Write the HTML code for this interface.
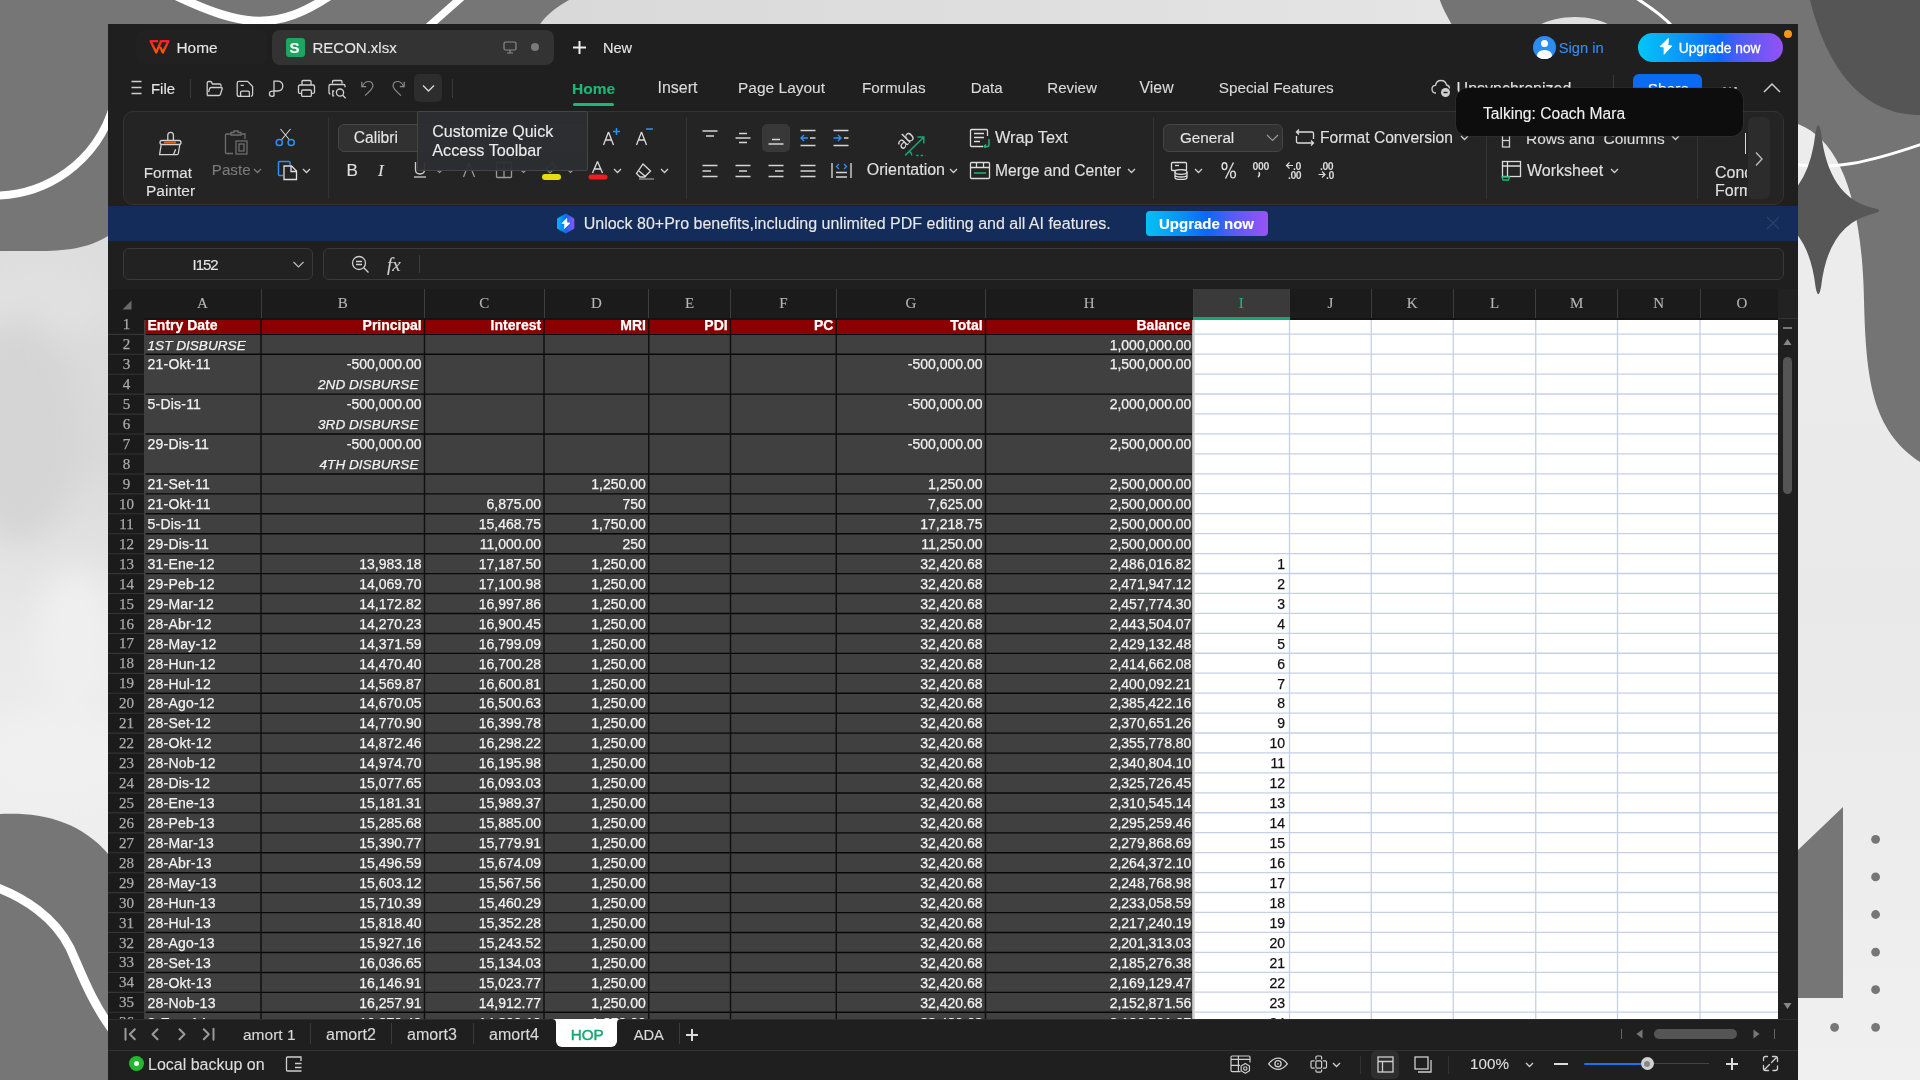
<!DOCTYPE html>
<html><head><meta charset="utf-8"><title>RECON.xlsx</title>
<style>
html,body{margin:0;padding:0;width:1920px;height:1080px;overflow:hidden;background:#e3e3e3}
body{position:relative;font-family:"Liberation Sans",sans-serif}
.r{position:absolute;display:block}
.t{position:absolute;white-space:pre;-webkit-text-stroke:0.12px currentColor}
.g .t{-webkit-text-stroke:0.25px currentColor}
</style></head><body>
<div style="position:absolute;left:0;top:0;width:1920px;height:1080px;filter:opacity(1)">

<svg class="r" style="left:0;top:0" width="1920" height="1080" viewBox="0 0 1920 1080">
 <defs><linearGradient id="lg" x1="0" y1="0" x2="0" y2="1"><stop offset="0.23" stop-color="#dddddd"/><stop offset="0.42" stop-color="#d9d9d9"/><stop offset="0.52" stop-color="#e3e3e3"/><stop offset="0.6" stop-color="#eaeaea"/><stop offset="0.75" stop-color="#eeeeee"/></linearGradient>
 <linearGradient id="rg" x1="0" y1="0" x2="0" y2="1"><stop offset="0.15" stop-color="#ececec"/><stop offset="0.5" stop-color="#e9e9e9"/><stop offset="1" stop-color="#f0f0f0"/></linearGradient></defs>
 <linearGradient id="tg" x1="0" y1="0" x2="1" y2="0"><stop offset="0" stop-color="#d9d9d9"/><stop offset="0.5" stop-color="#dedede"/><stop offset="1" stop-color="#e5e5e5"/></linearGradient>
 <rect width="1920" height="1080" fill="#e0e0e0"/>
 <rect x="530" y="0" width="930" height="30" fill="url(#tg)"/>
 <rect width="108" height="1080" fill="url(#lg)"/>
 <filter id="bl" x="-50%" y="-50%" width="200%" height="200%"><feGaussianBlur stdDeviation="14"/></filter>
 <g filter="url(#bl)"><ellipse cx="40" cy="300" rx="70" ry="40" fill="#e0e0e0"/><ellipse cx="20" cy="430" rx="60" ry="110" fill="#d5d5d5"/><ellipse cx="75" cy="640" rx="40" ry="70" fill="#efefef"/><ellipse cx="55" cy="760" rx="80" ry="50" fill="#f0f0f0"/></g>
 <!-- top-left grey -->
 <path d="M0 0 H569 C555 8 545 16 539 26 H108 V236 C92 246 72 251 40 251 H0 Z" fill="#767676"/>
 <path d="M-10 195.5 C45 197 97 163 114 104" stroke="#fff" stroke-width="8" fill="none"/>
 <path d="M174 -5 C210 12 236 21 259 21 C283 21 304 13 331 -5" stroke="#fff" stroke-width="8.5" fill="none"/>
 <path d="M462 -3 L428 27" stroke="#fff" stroke-width="7.5" fill="none"/>
 <!-- top-right grey -->
 <path d="M1440 0 H1920 V1080 H1798 V26 H1452.5 C1447 16 1442.5 8 1439.8 0 Z" fill="#747474"/>
 <path d="M1537 26 C1560 14 1590 14 1612 26 Z" fill="#e0e0e0"/>
 <path d="M1810 0 C1830 80 1870 115 1920 115 V0 Z" fill="#555"/>
 <path d="M1798 124 C1840 140 1862 200 1864 300 C1866 380 1872 430 1920 462 V1080 H1798 Z" fill="url(#rg)"/>
 <path d="M1636 -2 C1652 8 1663 16 1674 28" stroke="#fff" stroke-width="3" fill="none"/>
 <path d="M1790 163 C1830 172 1870 162 1925 143" stroke="#fff" stroke-width="3" fill="none"/>
 <path transform="translate(1818.3 210.8) scale(1.1 1.03) translate(-1817 -210)" d="M1814.5 134 Q1817 120 1819.5 134 Q1826 197 1866 207 Q1879 210 1866 213 Q1826 223 1819.5 284 Q1817 298 1814.5 284 Q1808 223 1768 213 Q1755 210 1768 207 Q1808 197 1814.5 134 Z" fill="#575757"/>
 <!-- bottom-left grey -->
 <path d="M0 814 C40 812 80 820 110 856 V1080 H0 Z" fill="#767676"/>
 <path d="M-10 885 C25 897 55 918 70 948 C82 975 92 1003 114 1032" stroke="#fff" stroke-width="9" fill="none"/>
 <!-- bottom-right -->
 <path d="M1798 850 L1843 807 V998 H1798 Z" fill="#767676"/>
 <g fill="#767676"><circle cx="1875.6" cy="839.3" r="4.4"/><circle cx="1875.6" cy="876.9" r="4.4"/><circle cx="1875.6" cy="914.5" r="4.4"/><circle cx="1875.6" cy="952.1" r="4.4"/><circle cx="1875.6" cy="989.7" r="4.4"/><circle cx="1875.6" cy="1027.3" r="4.4"/><circle cx="1834.6" cy="1027.3" r="4.4"/></g>
</svg>

<div class="r" style="left:108px;top:24px;width:1690px;height:1056px;background:#1f1f1f;"></div>
<div class="r" style="left:136px;top:30px;width:131px;height:34px;background:#212121;border-radius:8px"></div>
<svg class="r" style="left:145px;top:34px;" width="30" height="24" viewBox="0 0 30 24" fill="none"><defs><linearGradient id="wg" gradientUnits="userSpaceOnUse" x1="0" y1="6" x2="0" y2="19"><stop offset="0" stop-color="#ff1a28"/><stop offset="1" stop-color="#ff5c00"/></linearGradient></defs><path d="M13.2 7.2 H5.6 L11.3 18.4 L16 7.2 H23.4 L17.8 18.4 L15.1 12.8" stroke="url(#wg)" stroke-width="2.3" stroke-linejoin="round"/></svg>
<div class="t" style="left:176.50px;top:37.75px;font-family:'Liberation Sans',sans-serif;font-size:15.4px;font-weight:400;font-style:normal;color:#e6e6e6;line-height:20px;">Home</div>
<div class="r" style="left:272px;top:30px;width:282px;height:35px;background:#333333;border-radius:8px"></div>
<div class="r" style="left:286px;top:38px;width:19px;height:19px;background:#1ea661;border-radius:3px"></div>
<div class="t" style="left:289.50px;top:38.00px;font-family:'Liberation Sans',sans-serif;font-size:15px;font-weight:700;font-style:normal;color:#fff;line-height:20px;">S</div>
<div class="t" style="left:312.50px;top:38.00px;font-family:'Liberation Sans',sans-serif;font-size:15px;font-weight:400;font-style:normal;color:#e6e6e6;line-height:20px;">RECON.xlsx</div>
<svg class="r" style="left:503px;top:41px;" width="14" height="13" viewBox="0 0 14 13" fill="none"><rect x="1" y="1" width="12" height="8" rx="1.5" stroke="#8a8a8a" stroke-width="1.2"/><path d="M4 12 H10 M7 9 V12" stroke="#8a8a8a" stroke-width="1.2"/></svg>
<div class="r" style="left:531px;top:43px;width:8px;height:8px;border-radius:50%;background:#7a7a7a"></div>
<svg class="r" style="left:572px;top:40px;" width="15" height="15" viewBox="0 0 15 15" fill="none"><path d="M7.5 1 V14 M1 7.5 H14" stroke="#eee" stroke-width="2"/></svg>
<div class="t" style="left:603.00px;top:38.00px;font-family:'Liberation Sans',sans-serif;font-size:14.5px;font-weight:400;font-style:normal;color:#e6e6e6;line-height:20px;">New</div>
<div class="r" style="left:1532.5px;top:35.5px;width:23.5px;height:23.5px;border-radius:50%;background:#2b8cf5;overflow:hidden"><div style="position:absolute;left:8.2px;top:4.8px;width:7.2px;height:7.2px;border-radius:50%;background:#fff"></div><div style="position:absolute;left:4.5px;top:14px;width:14.5px;height:11px;border-radius:50%;background:#fff"></div></div>
<div class="t" style="left:1558.75px;top:38.00px;font-family:'Liberation Sans',sans-serif;font-size:14.7px;font-weight:400;font-style:normal;color:#2f8ff7;line-height:20px;">Sign in</div>
<div class="r" style="left:1638px;top:33px;width:144.5px;height:28.5px;border-radius:15px;background:linear-gradient(90deg,#02c6f7 0%,#0a9af8 28%,#0a6af8 56%,#4a5cf6 68%,#9452f5 100%)"></div>
<svg class="r" style="left:1658px;top:37px;" width="16" height="20" viewBox="0 0 16 20" fill="none"><path d="M10.4 1.3 L2.2 9.5 L6.1 10 L6.1 17.3 L13.8 9 L9.9 8.4 Z" fill="#fff" stroke="#fff" stroke-width="0.9" stroke-linejoin="round"/></svg>
<div class="t" style="left:1678.75px;top:39.20px;font-family:'Liberation Sans',sans-serif;font-size:13.75px;font-weight:400;font-style:normal;color:#fff;line-height:20px;-webkit-text-stroke:0.3px #fff">Upgrade now</div>
<div class="r" style="left:1784px;top:29.5px;width:8px;height:8px;border-radius:50%;background:#f7941d"></div>
<svg class="r" style="left:131px;top:80px;" width="11" height="15" viewBox="0 0 11 15" fill="none"><path d="M0.5 1.5 H10.5 M0.5 7.5 H10.5 M0.5 13.5 H10.5" stroke="#cfcfcf" stroke-width="1.3"/></svg>
<div class="t" style="left:151.00px;top:78.70px;font-family:'Liberation Sans',sans-serif;font-size:14.9px;font-weight:400;font-style:normal;color:#e6e6e6;line-height:20px;">File</div>
<div class="r" style="left:190px;top:79px;width:1px;height:19px;background:#3a3a3a;"></div>
<svg class="r" style="left:206px;top:80px;" width="18" height="17" viewBox="0 0 18 17" fill="none"><path d="M1.2 15.5 V3 Q1.2 1.5 2.7 1.5 H4.3 Q5.3 1.5 5.8 2.5 L6.4 4 H13.6 Q15 4 15 5.4 V6.5" stroke="#cfcfcf" stroke-width="1.3"/><path d="M1.2 15.5 H12.8 Q14.1 15.5 14.4 14.3 L16.2 8.8 Q16.5 7.5 15.3 7.5 H5 Q3.9 7.5 3.6 8.6 L2.6 12.2" stroke="#cfcfcf" stroke-width="1.3"/></svg>
<svg class="r" style="left:236px;top:80px;" width="19" height="18" viewBox="0 0 19 18" fill="none"><path d="M3 1.4 H11.6 L16.6 6.6 V14.6 Q16.6 16.4 14.8 16.4 M4.4 16.4 H3 Q1.2 16.4 1.2 14.6 V3.2 Q1.2 1.4 3 1.4" stroke="#cfcfcf" stroke-width="1.3"/><path d="M4.6 16.4 V12.4 Q4.6 11.2 5.8 11.2 H12.2 Q13.4 11.2 13.4 12.4 V16.4 Z" stroke="#cfcfcf" stroke-width="1.3"/><path d="M4.6 5.4 H7.8" stroke="#cfcfcf" stroke-width="1.3"/></svg>
<svg class="r" style="left:268px;top:80px;" width="16" height="18" viewBox="0 0 16 18" fill="none"><path d="M6 16.2 V1.2 H9.4 Q14.8 1.2 14.8 6.1 Q14.8 11 9.4 11 H6 M6 11.2 H4.6 Q1.4 11.2 1.4 13.8 Q1.4 16.4 4 16.4 Q6 16.4 6 14.4" stroke="#cfcfcf" stroke-width="1.3"/></svg>
<svg class="r" style="left:297px;top:79px;" width="19" height="19" viewBox="0 0 19 19" fill="none"><path d="M5 6 V2.6 Q5 1.5 6.1 1.5 H12.9 Q14 1.5 14 2.6 V6" stroke="#cfcfcf" stroke-width="1.3"/><path d="M4.4 14.4 H3 Q1.5 14.4 1.5 12.9 V7.5 Q1.5 6 3 6 H16 Q17.5 6 17.5 7.5 V12.9 Q17.5 14.4 16 14.4 H14.6" stroke="#cfcfcf" stroke-width="1.3"/><rect x="4.6" y="11" width="9.8" height="6.4" rx="1.2" stroke="#cfcfcf" stroke-width="1.3"/></svg>
<svg class="r" style="left:327px;top:79px;" width="21" height="21" viewBox="0 0 21 21" fill="none"><path d="M5.5 4.6 V2.6 Q5.5 1.5 6.6 1.5 H13.9 Q15 1.5 15 2.6 V4.6" stroke="#cfcfcf" stroke-width="1.3"/><path d="M3.4 15 Q2 15 2 13.6 V6.9 Q2 5.5 3.4 5.5 H16.6 Q18 5.5 18 6.9 V8.2" stroke="#cfcfcf" stroke-width="1.3"/><path d="M7.2 12 H5.8 V16.8 H7.2" stroke="#cfcfcf" stroke-width="1.3"/><circle cx="13" cy="13.6" r="3.6" stroke="#cfcfcf" stroke-width="1.3"/><path d="M15.7 16.3 L18.6 19.2" stroke="#cfcfcf" stroke-width="1.3"/></svg>
<svg class="r" style="left:360px;top:80px;" width="16" height="17" viewBox="0 0 16 17" fill="none"><path d="M2.3 6.3 Q4.8 1.5 8.3 1.5 Q12.9 1.5 12.9 6.2 Q12.9 8.6 5 15.6" stroke="#8a8a8a" stroke-width="1.2"/><path d="M1.8 1.8 V6.6 H6.2" stroke="#8a8a8a" stroke-width="1.2"/></svg>
<svg class="r" style="left:389.6px;top:80px;" width="16" height="17" viewBox="0 0 16 17" fill="none"><path d="M13.7 6.3 Q11.2 1.5 7.7 1.5 Q3.1 1.5 3.1 6.2 Q3.1 8.6 11 15.6" stroke="#8a8a8a" stroke-width="1.2"/><path d="M14.2 1.8 V6.6 H9.8" stroke="#8a8a8a" stroke-width="1.2"/></svg>
<div class="r" style="left:414px;top:74px;width:28px;height:28px;background:#2d2d2d;border-radius:5px"></div>
<svg class="r" style="left:421px;top:84px;" width="15" height="9" viewBox="0 0 15 9" fill="none"><path d="M2 1.5 L7.5 7 L13 1.5" stroke="#d8d8d8" stroke-width="1.3"/></svg>
<div class="r" style="left:452px;top:79px;width:1px;height:19px;background:#3a3a3a;"></div>
<div class="t" style="left:572.00px;top:78.50px;font-family:'Liberation Sans',sans-serif;font-size:15.5px;font-weight:700;font-style:normal;color:#1db877;line-height:20px;">Home</div>
<div class="r" style="left:573px;top:102.5px;width:41px;height:3px;background:#1db877;border-radius:2px"></div>
<div class="t" style="left:657.50px;top:78.20px;font-family:'Liberation Sans',sans-serif;font-size:16px;font-weight:400;font-style:normal;color:#dadada;line-height:20px;">Insert</div>
<div class="t" style="left:738.00px;top:78.20px;font-family:'Liberation Sans',sans-serif;font-size:15.5px;font-weight:400;font-style:normal;color:#dadada;line-height:20px;">Page Layout</div>
<div class="t" style="left:862.00px;top:78.20px;font-family:'Liberation Sans',sans-serif;font-size:15.25px;font-weight:400;font-style:normal;color:#dadada;line-height:20px;">Formulas</div>
<div class="t" style="left:970.80px;top:78.20px;font-family:'Liberation Sans',sans-serif;font-size:15.1px;font-weight:400;font-style:normal;color:#dadada;line-height:20px;">Data</div>
<div class="t" style="left:1047.30px;top:78.20px;font-family:'Liberation Sans',sans-serif;font-size:15.1px;font-weight:400;font-style:normal;color:#dadada;line-height:20px;">Review</div>
<div class="t" style="left:1139.60px;top:78.20px;font-family:'Liberation Sans',sans-serif;font-size:15.8px;font-weight:400;font-style:normal;color:#dadada;line-height:20px;">View</div>
<div class="t" style="left:1218.75px;top:78.20px;font-family:'Liberation Sans',sans-serif;font-size:15.3px;font-weight:400;font-style:normal;color:#dadada;line-height:20px;">Special Features</div>
<svg class="r" style="left:1431px;top:79px;" width="21" height="19" viewBox="0 0 21 19" fill="none"><path d="M5 14 Q1 14 1 10 Q1 6.5 4.5 6.3 Q5.5 1.5 10 1.5 Q14.5 1.5 15.5 6 Q18.5 6.5 18.5 9.5" stroke="#cfcfcf" stroke-width="1.3"/><circle cx="14.5" cy="13.5" r="4.5" fill="#cfcfcf"/><path d="M12.5 13.5 H16.5" stroke="#1f1f1f" stroke-width="1.4"/></svg>
<div class="t" style="left:1456.60px;top:78.50px;font-family:'Liberation Sans',sans-serif;font-size:16px;font-weight:400;font-style:normal;color:#e6e6e6;line-height:20px;">Unsynchronized</div>
<div class="r" style="left:1613px;top:75px;width:1px;height:13px;background:#3a3a3a;"></div>
<div class="r" style="left:1633px;top:74px;width:68.6px;height:20px;background:#0a6cf5;border-radius:6px 6px 0 0"></div>
<div class="t" style="left:1647.70px;top:79.00px;font-family:'Liberation Sans',sans-serif;font-size:15.5px;font-weight:400;font-style:normal;color:#fff;line-height:20px;">Share</div>
<div class="r" style="left:1723px;top:86.5px;width:2.5px;height:2.5px;background:#cfcfcf;border-radius:50%"></div>
<div class="r" style="left:1728.5px;top:86.5px;width:2.5px;height:2.5px;background:#cfcfcf;border-radius:50%"></div>
<div class="r" style="left:1734px;top:86.5px;width:2.5px;height:2.5px;background:#cfcfcf;border-radius:50%"></div>
<svg class="r" style="left:1763px;top:82px;" width="18" height="11" viewBox="0 0 18 11" fill="none"><path d="M1 10 L9 2 L17 10" stroke="#cfcfcf" stroke-width="1.5"/></svg>
<div class="r" style="left:122.5px;top:111px;width:1661px;height:93.5px;border-radius:10px;background:#242424;border:1px solid #333;box-sizing:border-box"></div>
<div class="r" style="left:328px;top:117px;width:1px;height:82px;background:#333;"></div>
<div class="r" style="left:686px;top:117px;width:1px;height:82px;background:#333;"></div>
<div class="r" style="left:1153px;top:117px;width:1px;height:82px;background:#333;"></div>
<div class="r" style="left:1485.5px;top:117px;width:1px;height:82px;background:#333;"></div>
<div class="r" style="left:1696.75px;top:117px;width:1px;height:82px;background:#333;"></div>
<svg class="r" style="left:150px;top:125px;" width="40" height="35" viewBox="0 0 40 35" fill="none"><path d="M17.8 15.5 V10.2 Q17.8 7.3 20.6 7.3 Q23.4 7.3 23.4 10.2 V15.5" stroke="#d2d2d2" stroke-width="1.3"/><path d="M12 15.5 H29 Q31 15.5 31 17.5 Q31 19.5 29 19.5 H12 Q10 19.5 10 17.5 Q10 15.5 12 15.5 Z" stroke="#d2d2d2" stroke-width="1.3"/><path d="M11.2 19.5 L9.6 29.6 H27 Q28 29.6 28.3 28.6 L29.8 19.5 M25.6 24.3 L23.6 29.6" stroke="#d2d2d2" stroke-width="1.3"/><path d="M14 17.5 H26" stroke="#e8601c" stroke-width="1.9"/></svg>
<div class="t" style="left:143.75px;top:162.50px;font-family:'Liberation Sans',sans-serif;font-size:15.2px;font-weight:400;font-style:normal;color:#e0e0e0;line-height:20px;">Format</div>
<div class="t" style="left:146.00px;top:180.80px;font-family:'Liberation Sans',sans-serif;font-size:15.5px;font-weight:400;font-style:normal;color:#e0e0e0;line-height:20px;">Painter</div>
<svg class="r" style="left:224px;top:130px;" width="26" height="26" viewBox="0 0 26 26" fill="none"><path d="M7 4 H2.5 Q1.5 4 1.5 5 V22.5 Q1.5 23.5 2.5 23.5 H9" stroke="#6e6e6e" stroke-width="1.3"/><path d="M7 5 V2.5 H10 V1 H14 V2.5 H17 V5 Z" stroke="#6e6e6e" stroke-width="1.3"/><path d="M17.5 4 H21 V9" stroke="#6e6e6e" stroke-width="1.3"/><rect x="12" y="11" width="11" height="13" stroke="#6e6e6e" stroke-width="1.3"/><rect x="15" y="14" width="5" height="7" stroke="#6e6e6e" stroke-width="1.3"/></svg>
<div class="t" style="left:211.75px;top:160.00px;font-family:'Liberation Sans',sans-serif;font-size:15.2px;font-weight:400;font-style:normal;color:#7a7a7a;line-height:20px;">Paste</div>
<svg class="r" style="left:253px;top:168px;" width="9" height="6" viewBox="0 0 9 6" fill="none"><path d="M1 1 L4.5 4.5 L8 1" stroke="#7a7a7a" stroke-width="1.3"/></svg>
<svg class="r" style="left:275px;top:128px;" width="21" height="19" viewBox="0 0 21 19" fill="none"><path d="M5.5 1 L14.6 12 M15.5 1 L6.4 12" stroke="#d2d2d2" stroke-width="1.1"/><circle cx="4.3" cy="14.5" r="3.1" stroke="#2f8ff7" stroke-width="1.5"/><circle cx="16.2" cy="14.5" r="3.1" stroke="#2f8ff7" stroke-width="1.5"/></svg>
<svg class="r" style="left:277px;top:160px;" width="22" height="21" viewBox="0 0 22 21" fill="none"><path d="M6 15.5 H2.5 Q1.5 15.5 1.5 14.5 V2.5 Q1.5 1.5 2.5 1.5 H12 Q13 1.5 13 2.5 V5" stroke="#2f8ff7" stroke-width="1.5"/><path d="M7 6 H14.5 L19.5 11 V19.5 H7 Z" stroke="#e0e0e0" stroke-width="1.3"/><path d="M14 6 V11.5 H19.5" stroke="#e0e0e0" stroke-width="1.3"/></svg>
<svg class="r" style="left:302px;top:168px;" width="9" height="6" viewBox="0 0 9 6" fill="none"><path d="M1 1 L4.5 4.5 L8 1" stroke="#cfcfcf" stroke-width="1.3"/></svg>
<div class="r" style="left:338px;top:124px;width:250px;height:28px;border-radius:6px;background:#313131;border:1px solid #454545;box-sizing:border-box"></div>
<div class="t" style="left:353.75px;top:128.00px;font-family:'Liberation Sans',sans-serif;font-size:15.6px;font-weight:400;font-style:normal;color:#e6e6e6;line-height:20px;">Calibri</div>
<div class="t" style="left:346.50px;top:161.25px;font-family:'Liberation Sans',sans-serif;font-size:17px;font-weight:400;font-style:normal;color:#e0e0e0;line-height:20px;">B</div>
<div class="t" style="left:378.00px;top:161.25px;font-family:'Liberation Serif',sans-serif;font-size:17px;font-weight:400;font-style:italic;color:#e0e0e0;line-height:20px;">I</div>
<svg class="r" style="left:412px;top:160px;" width="16" height="20" viewBox="0 0 16 20" fill="none"><path d="M3.5 2 V9.5 Q3.5 14 8 14 Q12.5 14 12.5 9.5 V2" stroke="#cfcfcf" stroke-width="1.3"/><path d="M2 17 H14" stroke="#cfcfcf" stroke-width="1.3"/></svg>
<svg class="r" style="left:436px;top:169px;" width="7" height="5" viewBox="0 0 7 5" fill="none"><path d="M1 1 L3.5 3.5 L6 1" stroke="#9a9a9a" stroke-width="1.2"/></svg>
<svg class="r" style="left:461px;top:161px;" width="16" height="17" viewBox="0 0 16 17" fill="none"><path d="M8 2 L2.5 16 M8 2 L13.5 16" stroke="#9a9a9a" stroke-width="1.3"/></svg>
<svg class="r" style="left:495px;top:161px;" width="18" height="18" viewBox="0 0 18 18" fill="none"><rect x="1.5" y="1.5" width="15" height="15" rx="1" stroke="#9a9a9a" stroke-width="1.3"/><path d="M1.5 9 H16.5 M9 1.5 V16.5" stroke="#9a9a9a" stroke-width="1.3"/></svg>
<svg class="r" style="left:520px;top:169px;" width="7" height="5" viewBox="0 0 7 5" fill="none"><path d="M1 1 L3.5 3.5 L6 1" stroke="#9a9a9a" stroke-width="1.2"/></svg>
<svg class="r" style="left:544px;top:160px;" width="14" height="14" viewBox="0 0 14 14" fill="none"><path d="M2 9 L8 3 L12 7 L6 13 Z M8 3 L10 1" stroke="#8a8a8a" stroke-width="1.2"/></svg>
<svg class="r" style="left:567px;top:169px;" width="7" height="5" viewBox="0 0 7 5" fill="none"><path d="M1 1 L3.5 3.5 L6 1" stroke="#9a9a9a" stroke-width="1.2"/></svg>
<div class="r" style="left:542.2px;top:174px;width:18.8px;height:6px;background:#e6dc12;border-radius:3px"></div>
<div class="r" style="left:416.5px;top:111px;width:171px;height:59.5px;background:rgba(45,46,49,0.94);border:1px solid #454545;box-sizing:border-box;border-radius:2px"></div>
<div class="t" style="left:432.25px;top:122.00px;font-family:'Liberation Sans',sans-serif;font-size:16px;font-weight:400;font-style:normal;color:#ececec;line-height:20px;">Customize Quick</div>
<div class="t" style="left:432.25px;top:140.25px;font-family:'Liberation Sans',sans-serif;font-size:16.2px;font-weight:400;font-style:normal;color:#ececec;line-height:20px;">Access Toolbar</div>
<svg class="r" style="left:602px;top:127px;" width="19" height="19" viewBox="0 0 19 19" fill="none"><path d="M6.5 5 L1.5 18 M6.5 5 L11.5 18 M3.5 13 H9.5" stroke="#dcdcdc" stroke-width="1.3"/><path d="M14.5 1 V8 M11 4.5 H18" stroke="#2f8ff7" stroke-width="1.5"/></svg>
<svg class="r" style="left:635px;top:127px;" width="19" height="19" viewBox="0 0 19 19" fill="none"><path d="M6.5 5 L1.5 18 M6.5 5 L11.5 18 M3.5 13 H9.5" stroke="#dcdcdc" stroke-width="1.3"/><path d="M11 2 H18" stroke="#2f8ff7" stroke-width="1.5"/></svg>
<svg class="r" style="left:588px;top:160px;" width="20" height="20" viewBox="0 0 20 20" fill="none"><path d="M9.5 1.5 L4.5 13 M9.5 1.5 L14.5 13 M6 9 H13" stroke="#dcdcdc" stroke-width="1.3"/><rect x="0.5" y="14.5" width="19" height="5" rx="2.5" fill="#f01d1d"/></svg>
<svg class="r" style="left:613px;top:168px;" width="9" height="6" viewBox="0 0 9 6" fill="none"><path d="M1 1 L4.5 4.5 L8 1" stroke="#cfcfcf" stroke-width="1.3"/></svg>
<svg class="r" style="left:635px;top:162px;" width="20" height="18" viewBox="0 0 20 18" fill="none"><path d="M8 2 L15.5 9 L9.5 15 H5 L1.5 11.5 Z" stroke="#dcdcdc" stroke-width="1.3"/><path d="M4 9 L11 15" stroke="#dcdcdc" stroke-width="1.3"/><path d="M4 17 H19" stroke="#9a9a9a" stroke-width="1.3"/></svg>
<svg class="r" style="left:660px;top:168px;" width="9" height="6" viewBox="0 0 9 6" fill="none"><path d="M1 1 L4.5 4.5 L8 1" stroke="#cfcfcf" stroke-width="1.3"/></svg>
<div class="r" style="left:762px;top:124px;width:27.5px;height:28px;background:#383838;border-radius:5px"></div>
<svg class="r" style="left:701px;top:130px;" width="18" height="9" viewBox="0 0 18 9" fill="none"><path d="M1.5 1 H16.5 M5 6 H13" stroke="#d4d4d4" stroke-width="1.4"/></svg>
<svg class="r" style="left:734px;top:132px;" width="18" height="12" viewBox="0 0 18 12" fill="none"><path d="M5 1.5 H13 M1.5 6 H16.5 M5 10.5 H13" stroke="#d4d4d4" stroke-width="1.4"/></svg>
<svg class="r" style="left:767px;top:138px;" width="18" height="8" viewBox="0 0 18 8" fill="none"><path d="M5 1.5 H13 M1.5 6 H16.5" stroke="#d4d4d4" stroke-width="1.4"/></svg>
<svg class="r" style="left:799px;top:129px;" width="18" height="18" viewBox="0 0 18 18" fill="none"><path d="M1.5 1.5 H16.5 M1.5 16.5 H16.5 M11 9 H16.5" stroke="#d4d4d4" stroke-width="1.4"/><path d="M9 9 H2 M5 6 L2 9 L5 12" stroke="#2f8ff7" stroke-width="1.4"/></svg>
<svg class="r" style="left:832px;top:129px;" width="18" height="18" viewBox="0 0 18 18" fill="none"><path d="M1.5 1.5 H16.5 M1.5 16.5 H16.5 M12 9 H16.5" stroke="#d4d4d4" stroke-width="1.4"/><path d="M1.5 9 H9 M6 6 L9 9 L6 12" stroke="#2f8ff7" stroke-width="1.4"/></svg>
<svg class="r" style="left:701px;top:164px;" width="18" height="15" viewBox="0 0 18 15" fill="none"><path d="M1.5 1.5 H16.5 M1.5 7 H10 M1.5 12.5 H16.5" stroke="#d4d4d4" stroke-width="1.4"/></svg>
<svg class="r" style="left:734px;top:164px;" width="18" height="15" viewBox="0 0 18 15" fill="none"><path d="M1.5 1.5 H16.5 M5 7 H13 M1.5 12.5 H16.5" stroke="#d4d4d4" stroke-width="1.4"/></svg>
<svg class="r" style="left:767px;top:164px;" width="18" height="15" viewBox="0 0 18 15" fill="none"><path d="M1.5 1.5 H16.5 M8 7 H16.5 M1.5 12.5 H16.5" stroke="#d4d4d4" stroke-width="1.4"/></svg>
<svg class="r" style="left:799px;top:164px;" width="18" height="15" viewBox="0 0 18 15" fill="none"><path d="M1.5 1.5 H16.5 M1.5 7 H16.5 M1.5 12.5 H16.5" stroke="#d4d4d4" stroke-width="1.4"/></svg>
<svg class="r" style="left:831px;top:162px;" width="21" height="17" viewBox="0 0 21 17" fill="none"><path d="M1 1 V16 M20 1 V16 M5 10.5 H16 M5 15 H16" stroke="#d4d4d4" stroke-width="1.4"/><path d="M8 2 L5.5 4.5 L8 7 M13 2 L15.5 4.5 L13 7" stroke="#2f8ff7" stroke-width="1.3"/></svg>
<svg class="r" style="left:896px;top:128px;" width="32" height="30" viewBox="0 0 32 30" fill="none"><text x="0" y="0" transform="translate(6.4 22.2) rotate(-45)" font-family="Liberation Sans" font-size="16.5" fill="#d8d8d8" style="-webkit-text-stroke:0.1px #d8d8d8">ab</text><path d="M9.2 27.4 L27.6 9.2 M21.4 9 H27.8 V15.4" stroke="#14a874" stroke-width="1.5"/><path d="M20.2 27.4 H29.5" stroke="#14a874" stroke-width="1.5" stroke-dasharray="2.3 2.2"/><path d="M15.8 27.6 Q15.8 24.6 13.2 23.4" stroke="#14a874" stroke-width="1.4"/></svg>
<div class="t" style="left:866.75px;top:160.00px;font-family:'Liberation Sans',sans-serif;font-size:16px;font-weight:400;font-style:normal;color:#e0e0e0;line-height:20px;">Orientation</div>
<svg class="r" style="left:949px;top:168px;" width="9" height="6" viewBox="0 0 9 6" fill="none"><path d="M1 1 L4.5 4.5 L8 1" stroke="#cfcfcf" stroke-width="1.3"/></svg>
<svg class="r" style="left:969px;top:128px;" width="22" height="20" viewBox="0 0 22 20" fill="none"><path d="M14 18.5 H2.5 Q1.5 18.5 1.5 17.5 V2.5 Q1.5 1.5 2.5 1.5 H17.5 Q18.5 1.5 18.5 2.5 V8" stroke="#dcdcdc" stroke-width="1.3"/><path d="M5 5.5 H15 M5 9.5 H15 M5 13.5 H11" stroke="#dcdcdc" stroke-width="1.3"/><path d="M20 11 V17 Q20 18.5 18.5 18.5 H15 M17 16.5 L15 18.5 L17 20" stroke="#1db877" stroke-width="1.4"/></svg>
<div class="t" style="left:995.00px;top:127.00px;font-family:'Liberation Sans',sans-serif;font-size:16.3px;font-weight:400;font-style:normal;color:#e0e0e0;line-height:20px;">Wrap Text</div>
<svg class="r" style="left:969px;top:161px;" width="22" height="19" viewBox="0 0 22 19" fill="none"><rect x="1.5" y="1.5" width="19" height="16" rx="1" stroke="#dcdcdc" stroke-width="1.3"/><path d="M1.5 6.5 H20.5 M7.5 1.5 V6.5 M14.5 1.5 V6.5" stroke="#dcdcdc" stroke-width="1.3"/><path d="M5 12 H17" stroke="#1db877" stroke-width="1.5"/></svg>
<div class="t" style="left:995.00px;top:160.50px;font-family:'Liberation Sans',sans-serif;font-size:15.66px;font-weight:400;font-style:normal;color:#e0e0e0;line-height:20px;">Merge and Center</div>
<svg class="r" style="left:1127px;top:168px;" width="9" height="6" viewBox="0 0 9 6" fill="none"><path d="M1 1 L4.5 4.5 L8 1" stroke="#cfcfcf" stroke-width="1.3"/></svg>
<div class="r" style="left:1163.25px;top:124px;width:120px;height:28px;border-radius:6px;background:#313131;border:1px solid #454545;box-sizing:border-box"></div>
<div class="t" style="left:1180.00px;top:128.00px;font-family:'Liberation Sans',sans-serif;font-size:15.25px;font-weight:400;font-style:normal;color:#e6e6e6;line-height:20px;">General</div>
<svg class="r" style="left:1266px;top:134px;" width="13" height="8" viewBox="0 0 13 8" fill="none"><path d="M1 1 L6.5 6.5 L12 1" stroke="#9a9a9a" stroke-width="1.2"/></svg>
<svg class="r" style="left:1295px;top:128px;" width="20" height="19" viewBox="0 0 20 19" fill="none"><path d="M4 1.5 L1.5 4 L4 6.5 M1.5 4 H17 Q18.5 4 18.5 5.5 V11" stroke="#dcdcdc" stroke-width="1.3"/><path d="M16 17.5 L18.5 15 L16 12.5 M18.5 15 H3 Q1.5 15 1.5 13.5 V8" stroke="#dcdcdc" stroke-width="1.3"/></svg>
<div class="t" style="left:1320.00px;top:128.00px;font-family:'Liberation Sans',sans-serif;font-size:15.65px;font-weight:400;font-style:normal;color:#e0e0e0;line-height:20px;">Format Conversion</div>
<svg class="r" style="left:1460px;top:135px;" width="9" height="6" viewBox="0 0 9 6" fill="none"><path d="M1 1 L4.5 4.5 L8 1" stroke="#cfcfcf" stroke-width="1.3"/></svg>
<svg class="r" style="left:1170px;top:161px;" width="19" height="19" viewBox="0 0 19 19" fill="none"><rect x="1.5" y="1.5" width="15" height="8" rx="1" stroke="#dcdcdc" stroke-width="1.3"/><ellipse cx="11" cy="11" rx="6" ry="2.3" fill="#242424" stroke="#dcdcdc" stroke-width="1.3"/><path d="M5 11 V16.5 Q5 18.5 11 18.5 Q17 18.5 17 16.5 V11 M5 14 Q5 16 11 16 Q17 16 17 14" stroke="#dcdcdc" stroke-width="1.3"/><path d="M5 4.5 H9" stroke="#dcdcdc" stroke-width="1.3"/></svg>
<svg class="r" style="left:1194px;top:168px;" width="9" height="6" viewBox="0 0 9 6" fill="none"><path d="M1 1 L4.5 4.5 L8 1" stroke="#cfcfcf" stroke-width="1.3"/></svg>
<svg class="r" style="left:1220px;top:161px;" width="18" height="19" viewBox="0 0 18 19" fill="none"><ellipse cx="4.5" cy="5.2" rx="2.4" ry="3.4" stroke="#dcdcdc" stroke-width="1.4"/><path d="M13.5 1.5 L5.5 17.5" stroke="#dcdcdc" stroke-width="1.4"/><ellipse cx="13" cy="13.5" rx="2.4" ry="3.4" stroke="#dcdcdc" stroke-width="1.4"/></svg>
<svg class="r" style="left:1250px;top:160px;" width="90" height="22" viewBox="0 0 90 22" fill="none"><g font-family="Liberation Sans" font-size="10.5" font-weight="700" fill="#dcdcdc"><text x="2.5" y="9.5" letter-spacing="-0.3">000</text><text x="43" y="9.5" letter-spacing="-0.5">.0</text><text x="38" y="19" letter-spacing="-0.5">.00</text><text x="70" y="9.5" letter-spacing="-0.5">.00</text><text x="76" y="19" letter-spacing="-0.5">.0</text></g><path d="M8.5 12.5 Q9.5 12.5 9.5 14 Q9.5 16 8 17" stroke="#dcdcdc" stroke-width="1.6"/><path d="M36.5 5.5 H43 M39.5 2.5 L36.5 5.5 L39.5 8.5" stroke="#dcdcdc" stroke-width="1.2"/><path d="M68.5 14.5 H75 M72 11.5 L75 14.5 L72 17.5" stroke="#dcdcdc" stroke-width="1.2"/></svg>
<svg class="r" style="left:1501px;top:133px;" width="10" height="15" viewBox="0 0 10 15" fill="none"><rect x="1.5" y="1" width="7" height="13" stroke="#cfcfcf" stroke-width="1.3"/><path d="M1.5 7.5 H8.5" stroke="#cfcfcf" stroke-width="1.3"/></svg>
<div class="t" style="left:1526.00px;top:128.50px;font-family:'Liberation Sans',sans-serif;font-size:15.5px;font-weight:400;font-style:normal;color:#dcdcdc;line-height:20px;">Rows and  Columns</div>
<svg class="r" style="left:1671px;top:135px;" width="9" height="6" viewBox="0 0 9 6" fill="none"><path d="M1 1 L4.5 4.5 L8 1" stroke="#cfcfcf" stroke-width="1.3"/></svg>
<svg class="r" style="left:1501px;top:160px;" width="22" height="21" viewBox="0 0 22 21" fill="none"><rect x="1.5" y="1.5" width="18" height="15" stroke="#dcdcdc" stroke-width="1.3"/><path d="M1.5 6 H19.5 M6.5 1.5 V16.5" stroke="#dcdcdc" stroke-width="1.3"/><path d="M1 17 L2 20 H7.5 L8.5 17 Z" stroke="#1db877" stroke-width="1.3"/></svg>
<div class="t" style="left:1527.00px;top:161.00px;font-family:'Liberation Sans',sans-serif;font-size:16px;font-weight:400;font-style:normal;color:#e0e0e0;line-height:20px;">Worksheet</div>
<svg class="r" style="left:1610px;top:168px;" width="9" height="6" viewBox="0 0 9 6" fill="none"><path d="M1 1 L4.5 4.5 L8 1" stroke="#cfcfcf" stroke-width="1.3"/></svg>
<div class="r" style="left:1705px;top:125px;width:42px;height:75px;overflow:hidden">
<div style="position:absolute;left:39.5px;top:8px;width:1.5px;height:21px;background:#dcdcdc"></div>
<div class="t" style="left:10px;top:38px;font-family:'Liberation Sans';font-size:16px;line-height:20px;color:#e0e0e0">Cond</div>
<div class="t" style="left:10px;top:56px;font-family:'Liberation Sans';font-size:16px;line-height:20px;color:#e0e0e0">Form</div>
</div>
<div class="r" style="left:1748px;top:116.5px;width:21.5px;height:82.5px;background:#2c2c2c;border-radius:6px"></div>
<svg class="r" style="left:1754px;top:151px;" width="10" height="16" viewBox="0 0 10 16" fill="none"><path d="M2 1.5 L8 8 L2 14.5" stroke="#bcbcbc" stroke-width="1.4"/></svg>
<div class="r" style="left:1455.6px;top:87.8px;width:287.4px;height:47.8px;background:#0d0d0d;border-radius:12px;box-shadow:0 0 0 1px rgba(60,60,60,0.35)"></div>
<div class="t" style="left:1483.00px;top:104.25px;font-family:'Liberation Sans',sans-serif;font-size:15.6px;font-weight:400;font-style:normal;color:#f2f2f2;line-height:20px;">Talking: Coach Mara</div>
<div class="r" style="left:108px;top:206px;width:1690px;height:35px;background:#142c59;"></div>
<svg class="r" style="left:556px;top:213px;" width="19" height="21" viewBox="0 0 19 21" fill="none"><defs><linearGradient id="hg" x1="0" y1="0" x2="1" y2="0"><stop offset="0" stop-color="#02b8fb"/><stop offset="0.5" stop-color="#0a6cf7"/><stop offset="1" stop-color="#8f55f5"/></linearGradient></defs><path d="M9.7 1 L17.9 5.6 V15.4 L9.7 20 L1.5 15.4 V5.6 Z" fill="url(#hg)" stroke="url(#hg)" stroke-width="0.8" stroke-linejoin="round"/><path d="M10.7 5.3 L5.9 10.4 L8.7 10.8 L8.2 15.8 L14 10.1 L10.9 9.7 Z" fill="#fff" stroke="#fff" stroke-width="0.6" stroke-linejoin="round"/></svg>
<div class="t" style="left:583.70px;top:213.70px;font-family:'Liberation Sans',sans-serif;font-size:16px;font-weight:400;font-style:normal;color:#e8e8e8;line-height:20px;">Unlock 80+Pro benefits,including unlimited PDF editing and all AI features.</div>
<div class="r" style="left:1145.7px;top:210.7px;width:122.7px;height:25.7px;border-radius:4px;background:linear-gradient(90deg,#04c2f3 0%,#0b8ef6 30%,#0a68f7 50%,#4c5ef5 68%,#9b52f6 100%)"></div>
<div class="t" style="left:1159.00px;top:213.50px;font-family:'Liberation Sans',sans-serif;font-size:15px;font-weight:700;font-style:normal;color:#fff;line-height:20px;">Upgrade now</div>
<svg class="r" style="left:1766px;top:216px;" width="14" height="14" viewBox="0 0 14 14" fill="none"><path d="M1 1 L13 13 M13 1 L1 13" stroke="#2c4068" stroke-width="1.2"/></svg>
<div class="r" style="left:122.5px;top:248px;width:190.5px;height:32px;border-radius:6px;background:#222;border:1px solid #393939;box-sizing:border-box"></div>
<div class="t" style="left:192.50px;top:255.00px;font-family:'Liberation Sans',sans-serif;font-size:15px;font-weight:400;font-style:normal;color:#e6e6e6;line-height:20px;letter-spacing:-1px;">I152</div>
<svg class="r" style="left:292px;top:260px;" width="13" height="9" viewBox="0 0 13 9" fill="none"><path d="M1.5 2 L6.5 7 L11.5 2" stroke="#bdbdbd" stroke-width="1.2"/></svg>
<div class="r" style="left:323px;top:248px;width:1461px;height:32px;border-radius:6px;background:#222;border:1px solid #393939;box-sizing:border-box"></div>
<svg class="r" style="left:351px;top:255px;" width="19" height="19" viewBox="0 0 19 19" fill="none"><circle cx="8" cy="8" r="6.5" stroke="#cfcfcf" stroke-width="1.3"/><path d="M5 6.5 H11 M5 9.5 H11" stroke="#cfcfcf" stroke-width="1.3"/><path d="M12.8 12.8 L17.5 17.5" stroke="#cfcfcf" stroke-width="1.3"/></svg>
<div class="t" style="left:387.00px;top:255.00px;font-family:'Liberation Serif',sans-serif;font-size:19px;font-weight:400;font-style:italic;color:#cfcfcf;line-height:20px;">fx</div>
<div class="r" style="left:419px;top:255px;width:1px;height:18px;background:#3d3d3d;"></div>
<div class="r" style="left:108px;top:289px;width:1670px;height:29.25px;background:#1b1b1b;"></div>
<div class="r" style="left:1193px;top:289px;width:96.5px;height:29.25px;background:#3a3a3a;"></div>
<div class="t" style="left:2.50px;width:400px;text-align:center;top:293.00px;font-family:'Liberation Serif',sans-serif;font-size:15px;font-weight:400;font-style:normal;color:#b5b5b5;line-height:20px;">A</div>
<div class="r" style="left:260.5px;top:289px;width:1px;height:29px;background:#3d3d3d;"></div>
<div class="t" style="left:142.75px;width:400px;text-align:center;top:293.00px;font-family:'Liberation Serif',sans-serif;font-size:15px;font-weight:400;font-style:normal;color:#b5b5b5;line-height:20px;">B</div>
<div class="r" style="left:424.0px;top:289px;width:1px;height:29px;background:#3d3d3d;"></div>
<div class="t" style="left:284.25px;width:400px;text-align:center;top:293.00px;font-family:'Liberation Serif',sans-serif;font-size:15px;font-weight:400;font-style:normal;color:#b5b5b5;line-height:20px;">C</div>
<div class="r" style="left:543.5px;top:289px;width:1px;height:29px;background:#3d3d3d;"></div>
<div class="t" style="left:396.38px;width:400px;text-align:center;top:293.00px;font-family:'Liberation Serif',sans-serif;font-size:15px;font-weight:400;font-style:normal;color:#b5b5b5;line-height:20px;">D</div>
<div class="r" style="left:648.25px;top:289px;width:1px;height:29px;background:#3d3d3d;"></div>
<div class="t" style="left:489.62px;width:400px;text-align:center;top:293.00px;font-family:'Liberation Serif',sans-serif;font-size:15px;font-weight:400;font-style:normal;color:#b5b5b5;line-height:20px;">E</div>
<div class="r" style="left:730.0px;top:289px;width:1px;height:29px;background:#3d3d3d;"></div>
<div class="t" style="left:583.38px;width:400px;text-align:center;top:293.00px;font-family:'Liberation Serif',sans-serif;font-size:15px;font-weight:400;font-style:normal;color:#b5b5b5;line-height:20px;">F</div>
<div class="r" style="left:835.75px;top:289px;width:1px;height:29px;background:#3d3d3d;"></div>
<div class="t" style="left:710.88px;width:400px;text-align:center;top:293.00px;font-family:'Liberation Serif',sans-serif;font-size:15px;font-weight:400;font-style:normal;color:#b5b5b5;line-height:20px;">G</div>
<div class="r" style="left:985.0px;top:289px;width:1px;height:29px;background:#3d3d3d;"></div>
<div class="t" style="left:889.25px;width:400px;text-align:center;top:293.00px;font-family:'Liberation Serif',sans-serif;font-size:15px;font-weight:400;font-style:normal;color:#b5b5b5;line-height:20px;">H</div>
<div class="r" style="left:1192.5px;top:289px;width:1px;height:29px;background:#3d3d3d;"></div>
<div class="t" style="left:1041.25px;width:400px;text-align:center;top:293.00px;font-family:'Liberation Serif',sans-serif;font-size:15px;font-weight:400;font-style:normal;color:#1db877;line-height:20px;">I</div>
<div class="r" style="left:1289.0px;top:289px;width:1px;height:29px;background:#3d3d3d;"></div>
<div class="t" style="left:1130.38px;width:400px;text-align:center;top:293.00px;font-family:'Liberation Serif',sans-serif;font-size:15px;font-weight:400;font-style:normal;color:#b5b5b5;line-height:20px;">J</div>
<div class="r" style="left:1370.75px;top:289px;width:1px;height:29px;background:#3d3d3d;"></div>
<div class="t" style="left:1212.25px;width:400px;text-align:center;top:293.00px;font-family:'Liberation Serif',sans-serif;font-size:15px;font-weight:400;font-style:normal;color:#b5b5b5;line-height:20px;">K</div>
<div class="r" style="left:1452.75px;top:289px;width:1px;height:29px;background:#3d3d3d;"></div>
<div class="t" style="left:1294.50px;width:400px;text-align:center;top:293.00px;font-family:'Liberation Serif',sans-serif;font-size:15px;font-weight:400;font-style:normal;color:#b5b5b5;line-height:20px;">L</div>
<div class="r" style="left:1535.25px;top:289px;width:1px;height:29px;background:#3d3d3d;"></div>
<div class="t" style="left:1376.62px;width:400px;text-align:center;top:293.00px;font-family:'Liberation Serif',sans-serif;font-size:15px;font-weight:400;font-style:normal;color:#b5b5b5;line-height:20px;">M</div>
<div class="r" style="left:1617.0px;top:289px;width:1px;height:29px;background:#3d3d3d;"></div>
<div class="t" style="left:1458.75px;width:400px;text-align:center;top:293.00px;font-family:'Liberation Serif',sans-serif;font-size:15px;font-weight:400;font-style:normal;color:#b5b5b5;line-height:20px;">N</div>
<div class="r" style="left:1699.5px;top:289px;width:1px;height:29px;background:#3d3d3d;"></div>
<div class="t" style="left:1541.80px;width:400px;text-align:center;top:293.00px;font-family:'Liberation Serif',sans-serif;font-size:15px;font-weight:400;font-style:normal;color:#b5b5b5;line-height:20px;">O</div>
<div class="r" style="left:1778px;top:289px;width:20px;height:29px;background:#222;"></div>
<div class="r" style="left:1778px;top:318px;width:20px;height:1px;background:#333;"></div>
<svg class="r" style="left:122px;top:300px;" width="10" height="10" viewBox="0 0 10 10" fill="none"><path d="M9.5 0.5 V9.5 H0.5 Z" fill="#6a6a6a"/></svg>
<div class="r g" style="left:108px;top:318.25px;width:1670px;height:700.5px;overflow:hidden">
<div class="r" style="left:0.00px;top:0.00px;width:36.00px;height:710.00px;background:#1b1b1b;"></div>
<div class="r" style="left:36.00px;top:0.00px;width:1049.00px;height:710.00px;background:#404040;"></div>
<div class="r" style="left:1085.00px;top:0.00px;width:585.00px;height:710.00px;background:#ffffff;"></div>
<svg class="r" style="left:0;top:0" width="1670" height="710" viewBox="0 0 1670 710" fill="none"><rect x="37.69999999999999" y="0.95" width="1046.5" height="14.20" fill="#8b0000"/><path d="M37.69999999999999 16.35 H1084.2" stroke="#080808" stroke-width="1.4"/><path d="M37.69999999999999 36.29 H1084.2" stroke="#080808" stroke-width="1.4"/><path d="M37.69999999999999 76.17 H1084.2" stroke="#080808" stroke-width="1.4"/><path d="M37.69999999999999 116.05 H1084.2" stroke="#080808" stroke-width="1.4"/><path d="M37.69999999999999 155.93 H1084.2" stroke="#080808" stroke-width="1.4"/><path d="M37.69999999999999 175.87 H1084.2" stroke="#080808" stroke-width="1.4"/><path d="M37.69999999999999 195.81 H1084.2" stroke="#080808" stroke-width="1.4"/><path d="M37.69999999999999 215.75 H1084.2" stroke="#080808" stroke-width="1.4"/><path d="M37.69999999999999 235.69 H1084.2" stroke="#080808" stroke-width="1.4"/><path d="M37.69999999999999 255.63 H1084.2" stroke="#080808" stroke-width="1.4"/><path d="M37.69999999999999 275.57 H1084.2" stroke="#080808" stroke-width="1.4"/><path d="M37.69999999999999 295.51 H1084.2" stroke="#080808" stroke-width="1.4"/><path d="M37.69999999999999 315.45 H1084.2" stroke="#080808" stroke-width="1.4"/><path d="M37.69999999999999 335.39 H1084.2" stroke="#080808" stroke-width="1.4"/><path d="M37.69999999999999 355.33 H1084.2" stroke="#080808" stroke-width="1.4"/><path d="M37.69999999999999 375.27 H1084.2" stroke="#080808" stroke-width="1.4"/><path d="M37.69999999999999 395.21 H1084.2" stroke="#080808" stroke-width="1.4"/><path d="M37.69999999999999 415.15 H1084.2" stroke="#080808" stroke-width="1.4"/><path d="M37.69999999999999 435.09 H1084.2" stroke="#080808" stroke-width="1.4"/><path d="M37.69999999999999 455.03 H1084.2" stroke="#080808" stroke-width="1.4"/><path d="M37.69999999999999 474.97 H1084.2" stroke="#080808" stroke-width="1.4"/><path d="M37.69999999999999 494.91 H1084.2" stroke="#080808" stroke-width="1.4"/><path d="M37.69999999999999 514.85 H1084.2" stroke="#080808" stroke-width="1.4"/><path d="M37.69999999999999 534.79 H1084.2" stroke="#080808" stroke-width="1.4"/><path d="M37.69999999999999 554.73 H1084.2" stroke="#080808" stroke-width="1.4"/><path d="M37.69999999999999 574.67 H1084.2" stroke="#080808" stroke-width="1.4"/><path d="M37.69999999999999 594.61 H1084.2" stroke="#080808" stroke-width="1.4"/><path d="M37.69999999999999 614.55 H1084.2" stroke="#080808" stroke-width="1.4"/><path d="M37.69999999999999 634.49 H1084.2" stroke="#080808" stroke-width="1.4"/><path d="M37.69999999999999 654.43 H1084.2" stroke="#080808" stroke-width="1.4"/><path d="M37.69999999999999 674.37 H1084.2" stroke="#080808" stroke-width="1.4"/><path d="M37.69999999999999 694.31 H1084.2" stroke="#080808" stroke-width="1.4"/><path d="M37.69999999999999 714.25 H1084.2" stroke="#080808" stroke-width="1.4"/><path d="M153.00 0 V710" stroke="#111" stroke-width="1.5"/><path d="M316.50 0 V710" stroke="#111" stroke-width="1.5"/><path d="M436.00 0 V710" stroke="#111" stroke-width="1.5"/><path d="M540.75 0 V710" stroke="#111" stroke-width="1.5"/><path d="M622.50 0 V710" stroke="#111" stroke-width="1.5"/><path d="M728.25 0 V710" stroke="#111" stroke-width="1.5"/><path d="M877.50 0 V710" stroke="#111" stroke-width="1.5"/><path d="M0 16.35 H36" stroke="#353535" stroke-width="1.1"/><path d="M0 36.29 H36" stroke="#353535" stroke-width="1.1"/><path d="M0 56.23 H36" stroke="#353535" stroke-width="1.1"/><path d="M0 76.17 H36" stroke="#353535" stroke-width="1.1"/><path d="M0 96.11 H36" stroke="#353535" stroke-width="1.1"/><path d="M0 116.05 H36" stroke="#353535" stroke-width="1.1"/><path d="M0 135.99 H36" stroke="#353535" stroke-width="1.1"/><path d="M0 155.93 H36" stroke="#353535" stroke-width="1.1"/><path d="M0 175.87 H36" stroke="#353535" stroke-width="1.1"/><path d="M0 195.81 H36" stroke="#353535" stroke-width="1.1"/><path d="M0 215.75 H36" stroke="#353535" stroke-width="1.1"/><path d="M0 235.69 H36" stroke="#353535" stroke-width="1.1"/><path d="M0 255.63 H36" stroke="#353535" stroke-width="1.1"/><path d="M0 275.57 H36" stroke="#353535" stroke-width="1.1"/><path d="M0 295.51 H36" stroke="#353535" stroke-width="1.1"/><path d="M0 315.45 H36" stroke="#353535" stroke-width="1.1"/><path d="M0 335.39 H36" stroke="#353535" stroke-width="1.1"/><path d="M0 355.33 H36" stroke="#353535" stroke-width="1.1"/><path d="M0 375.27 H36" stroke="#353535" stroke-width="1.1"/><path d="M0 395.21 H36" stroke="#353535" stroke-width="1.1"/><path d="M0 415.15 H36" stroke="#353535" stroke-width="1.1"/><path d="M0 435.09 H36" stroke="#353535" stroke-width="1.1"/><path d="M0 455.03 H36" stroke="#353535" stroke-width="1.1"/><path d="M0 474.97 H36" stroke="#353535" stroke-width="1.1"/><path d="M0 494.91 H36" stroke="#353535" stroke-width="1.1"/><path d="M0 514.85 H36" stroke="#353535" stroke-width="1.1"/><path d="M0 534.79 H36" stroke="#353535" stroke-width="1.1"/><path d="M0 554.73 H36" stroke="#353535" stroke-width="1.1"/><path d="M0 574.67 H36" stroke="#353535" stroke-width="1.1"/><path d="M0 594.61 H36" stroke="#353535" stroke-width="1.1"/><path d="M0 614.55 H36" stroke="#353535" stroke-width="1.1"/><path d="M0 634.49 H36" stroke="#353535" stroke-width="1.1"/><path d="M0 654.43 H36" stroke="#353535" stroke-width="1.1"/><path d="M0 674.37 H36" stroke="#353535" stroke-width="1.1"/><path d="M0 694.31 H36" stroke="#353535" stroke-width="1.1"/><path d="M0 714.25 H36" stroke="#353535" stroke-width="1.1"/><path d="M1086.7 16.20 H1670" stroke="#c5cfe6" stroke-width="1.3"/><path d="M1086.7 36.14 H1670" stroke="#c5cfe6" stroke-width="1.3"/><path d="M1086.7 56.08 H1670" stroke="#c5cfe6" stroke-width="1.3"/><path d="M1086.7 76.02 H1670" stroke="#c5cfe6" stroke-width="1.3"/><path d="M1086.7 95.96 H1670" stroke="#c5cfe6" stroke-width="1.3"/><path d="M1086.7 115.90 H1670" stroke="#c5cfe6" stroke-width="1.3"/><path d="M1086.7 135.84 H1670" stroke="#c5cfe6" stroke-width="1.3"/><path d="M1086.7 155.78 H1670" stroke="#c5cfe6" stroke-width="1.3"/><path d="M1086.7 175.72 H1670" stroke="#c5cfe6" stroke-width="1.3"/><path d="M1086.7 195.66 H1670" stroke="#c5cfe6" stroke-width="1.3"/><path d="M1086.7 215.60 H1670" stroke="#c5cfe6" stroke-width="1.3"/><path d="M1086.7 235.54 H1670" stroke="#c5cfe6" stroke-width="1.3"/><path d="M1086.7 255.48 H1670" stroke="#c5cfe6" stroke-width="1.3"/><path d="M1086.7 275.42 H1670" stroke="#c5cfe6" stroke-width="1.3"/><path d="M1086.7 295.36 H1670" stroke="#c5cfe6" stroke-width="1.3"/><path d="M1086.7 315.30 H1670" stroke="#c5cfe6" stroke-width="1.3"/><path d="M1086.7 335.24 H1670" stroke="#c5cfe6" stroke-width="1.3"/><path d="M1086.7 355.18 H1670" stroke="#c5cfe6" stroke-width="1.3"/><path d="M1086.7 375.12 H1670" stroke="#c5cfe6" stroke-width="1.3"/><path d="M1086.7 395.06 H1670" stroke="#c5cfe6" stroke-width="1.3"/><path d="M1086.7 415.00 H1670" stroke="#c5cfe6" stroke-width="1.3"/><path d="M1086.7 434.94 H1670" stroke="#c5cfe6" stroke-width="1.3"/><path d="M1086.7 454.88 H1670" stroke="#c5cfe6" stroke-width="1.3"/><path d="M1086.7 474.82 H1670" stroke="#c5cfe6" stroke-width="1.3"/><path d="M1086.7 494.76 H1670" stroke="#c5cfe6" stroke-width="1.3"/><path d="M1086.7 514.70 H1670" stroke="#c5cfe6" stroke-width="1.3"/><path d="M1086.7 534.64 H1670" stroke="#c5cfe6" stroke-width="1.3"/><path d="M1086.7 554.58 H1670" stroke="#c5cfe6" stroke-width="1.3"/><path d="M1086.7 574.52 H1670" stroke="#c5cfe6" stroke-width="1.3"/><path d="M1086.7 594.46 H1670" stroke="#c5cfe6" stroke-width="1.3"/><path d="M1086.7 614.40 H1670" stroke="#c5cfe6" stroke-width="1.3"/><path d="M1086.7 634.34 H1670" stroke="#c5cfe6" stroke-width="1.3"/><path d="M1086.7 654.28 H1670" stroke="#c5cfe6" stroke-width="1.3"/><path d="M1086.7 674.22 H1670" stroke="#c5cfe6" stroke-width="1.3"/><path d="M1086.7 694.16 H1670" stroke="#c5cfe6" stroke-width="1.3"/><path d="M1086.7 714.10 H1670" stroke="#c5cfe6" stroke-width="1.3"/><path d="M1181.50 0 V710" stroke="#c5cfe6" stroke-width="1.3"/><path d="M1263.25 0 V710" stroke="#c5cfe6" stroke-width="1.3"/><path d="M1345.25 0 V710" stroke="#c5cfe6" stroke-width="1.3"/><path d="M1427.75 0 V710" stroke="#c5cfe6" stroke-width="1.3"/><path d="M1509.50 0 V710" stroke="#c5cfe6" stroke-width="1.3"/><path d="M1592.00 0 V710" stroke="#c5cfe6" stroke-width="1.3"/><rect x="1084.2" y="0" width="2.5" height="710" fill="#cfcfcf"/></svg>
<div class="t" style="left:-181.50px;width:400px;text-align:center;top:-3.85px;font-family:'Liberation Serif',sans-serif;font-size:15px;font-weight:400;font-style:normal;color:#ababab;line-height:20px;">1</div>
<div class="t" style="left:-181.50px;width:400px;text-align:center;top:16.09px;font-family:'Liberation Serif',sans-serif;font-size:15px;font-weight:400;font-style:normal;color:#ababab;line-height:20px;">2</div>
<div class="t" style="left:-181.50px;width:400px;text-align:center;top:36.03px;font-family:'Liberation Serif',sans-serif;font-size:15px;font-weight:400;font-style:normal;color:#ababab;line-height:20px;">3</div>
<div class="t" style="left:-181.50px;width:400px;text-align:center;top:55.97px;font-family:'Liberation Serif',sans-serif;font-size:15px;font-weight:400;font-style:normal;color:#ababab;line-height:20px;">4</div>
<div class="t" style="left:-181.50px;width:400px;text-align:center;top:75.91px;font-family:'Liberation Serif',sans-serif;font-size:15px;font-weight:400;font-style:normal;color:#ababab;line-height:20px;">5</div>
<div class="t" style="left:-181.50px;width:400px;text-align:center;top:95.85px;font-family:'Liberation Serif',sans-serif;font-size:15px;font-weight:400;font-style:normal;color:#ababab;line-height:20px;">6</div>
<div class="t" style="left:-181.50px;width:400px;text-align:center;top:115.79px;font-family:'Liberation Serif',sans-serif;font-size:15px;font-weight:400;font-style:normal;color:#ababab;line-height:20px;">7</div>
<div class="t" style="left:-181.50px;width:400px;text-align:center;top:135.73px;font-family:'Liberation Serif',sans-serif;font-size:15px;font-weight:400;font-style:normal;color:#ababab;line-height:20px;">8</div>
<div class="t" style="left:-181.50px;width:400px;text-align:center;top:155.67px;font-family:'Liberation Serif',sans-serif;font-size:15px;font-weight:400;font-style:normal;color:#ababab;line-height:20px;">9</div>
<div class="t" style="left:-181.50px;width:400px;text-align:center;top:175.61px;font-family:'Liberation Serif',sans-serif;font-size:15px;font-weight:400;font-style:normal;color:#ababab;line-height:20px;">10</div>
<div class="t" style="left:-181.50px;width:400px;text-align:center;top:195.55px;font-family:'Liberation Serif',sans-serif;font-size:15px;font-weight:400;font-style:normal;color:#ababab;line-height:20px;">11</div>
<div class="t" style="left:-181.50px;width:400px;text-align:center;top:215.49px;font-family:'Liberation Serif',sans-serif;font-size:15px;font-weight:400;font-style:normal;color:#ababab;line-height:20px;">12</div>
<div class="t" style="left:-181.50px;width:400px;text-align:center;top:235.43px;font-family:'Liberation Serif',sans-serif;font-size:15px;font-weight:400;font-style:normal;color:#ababab;line-height:20px;">13</div>
<div class="t" style="left:-181.50px;width:400px;text-align:center;top:255.37px;font-family:'Liberation Serif',sans-serif;font-size:15px;font-weight:400;font-style:normal;color:#ababab;line-height:20px;">14</div>
<div class="t" style="left:-181.50px;width:400px;text-align:center;top:275.31px;font-family:'Liberation Serif',sans-serif;font-size:15px;font-weight:400;font-style:normal;color:#ababab;line-height:20px;">15</div>
<div class="t" style="left:-181.50px;width:400px;text-align:center;top:295.25px;font-family:'Liberation Serif',sans-serif;font-size:15px;font-weight:400;font-style:normal;color:#ababab;line-height:20px;">16</div>
<div class="t" style="left:-181.50px;width:400px;text-align:center;top:315.19px;font-family:'Liberation Serif',sans-serif;font-size:15px;font-weight:400;font-style:normal;color:#ababab;line-height:20px;">17</div>
<div class="t" style="left:-181.50px;width:400px;text-align:center;top:335.13px;font-family:'Liberation Serif',sans-serif;font-size:15px;font-weight:400;font-style:normal;color:#ababab;line-height:20px;">18</div>
<div class="t" style="left:-181.50px;width:400px;text-align:center;top:355.07px;font-family:'Liberation Serif',sans-serif;font-size:15px;font-weight:400;font-style:normal;color:#ababab;line-height:20px;">19</div>
<div class="t" style="left:-181.50px;width:400px;text-align:center;top:375.01px;font-family:'Liberation Serif',sans-serif;font-size:15px;font-weight:400;font-style:normal;color:#ababab;line-height:20px;">20</div>
<div class="t" style="left:-181.50px;width:400px;text-align:center;top:394.95px;font-family:'Liberation Serif',sans-serif;font-size:15px;font-weight:400;font-style:normal;color:#ababab;line-height:20px;">21</div>
<div class="t" style="left:-181.50px;width:400px;text-align:center;top:414.89px;font-family:'Liberation Serif',sans-serif;font-size:15px;font-weight:400;font-style:normal;color:#ababab;line-height:20px;">22</div>
<div class="t" style="left:-181.50px;width:400px;text-align:center;top:434.83px;font-family:'Liberation Serif',sans-serif;font-size:15px;font-weight:400;font-style:normal;color:#ababab;line-height:20px;">23</div>
<div class="t" style="left:-181.50px;width:400px;text-align:center;top:454.77px;font-family:'Liberation Serif',sans-serif;font-size:15px;font-weight:400;font-style:normal;color:#ababab;line-height:20px;">24</div>
<div class="t" style="left:-181.50px;width:400px;text-align:center;top:474.71px;font-family:'Liberation Serif',sans-serif;font-size:15px;font-weight:400;font-style:normal;color:#ababab;line-height:20px;">25</div>
<div class="t" style="left:-181.50px;width:400px;text-align:center;top:494.65px;font-family:'Liberation Serif',sans-serif;font-size:15px;font-weight:400;font-style:normal;color:#ababab;line-height:20px;">26</div>
<div class="t" style="left:-181.50px;width:400px;text-align:center;top:514.59px;font-family:'Liberation Serif',sans-serif;font-size:15px;font-weight:400;font-style:normal;color:#ababab;line-height:20px;">27</div>
<div class="t" style="left:-181.50px;width:400px;text-align:center;top:534.53px;font-family:'Liberation Serif',sans-serif;font-size:15px;font-weight:400;font-style:normal;color:#ababab;line-height:20px;">28</div>
<div class="t" style="left:-181.50px;width:400px;text-align:center;top:554.47px;font-family:'Liberation Serif',sans-serif;font-size:15px;font-weight:400;font-style:normal;color:#ababab;line-height:20px;">29</div>
<div class="t" style="left:-181.50px;width:400px;text-align:center;top:574.41px;font-family:'Liberation Serif',sans-serif;font-size:15px;font-weight:400;font-style:normal;color:#ababab;line-height:20px;">30</div>
<div class="t" style="left:-181.50px;width:400px;text-align:center;top:594.35px;font-family:'Liberation Serif',sans-serif;font-size:15px;font-weight:400;font-style:normal;color:#ababab;line-height:20px;">31</div>
<div class="t" style="left:-181.50px;width:400px;text-align:center;top:614.29px;font-family:'Liberation Serif',sans-serif;font-size:15px;font-weight:400;font-style:normal;color:#ababab;line-height:20px;">32</div>
<div class="t" style="left:-181.50px;width:400px;text-align:center;top:634.23px;font-family:'Liberation Serif',sans-serif;font-size:15px;font-weight:400;font-style:normal;color:#ababab;line-height:20px;">33</div>
<div class="t" style="left:-181.50px;width:400px;text-align:center;top:654.17px;font-family:'Liberation Serif',sans-serif;font-size:15px;font-weight:400;font-style:normal;color:#ababab;line-height:20px;">34</div>
<div class="t" style="left:-181.50px;width:400px;text-align:center;top:674.11px;font-family:'Liberation Serif',sans-serif;font-size:15px;font-weight:400;font-style:normal;color:#ababab;line-height:20px;">35</div>
<div class="t" style="left:-181.50px;width:400px;text-align:center;top:694.05px;font-family:'Liberation Serif',sans-serif;font-size:15px;font-weight:400;font-style:normal;color:#ababab;line-height:20px;">36</div>
<div class="t" style="left:39.50px;top:-3.65px;font-family:'Liberation Sans',sans-serif;font-size:14px;font-weight:700;font-style:normal;color:#fff;line-height:20px;">Entry Date</div>
<div class="t" style="left:-86.30px;width:400px;text-align:right;top:-3.65px;font-family:'Liberation Sans',sans-serif;font-size:14px;font-weight:700;font-style:normal;color:#fff;line-height:20px;">Principal</div>
<div class="t" style="left:33.20px;width:400px;text-align:right;top:-3.65px;font-family:'Liberation Sans',sans-serif;font-size:14px;font-weight:700;font-style:normal;color:#fff;line-height:20px;">Interest</div>
<div class="t" style="left:137.95px;width:400px;text-align:right;top:-3.65px;font-family:'Liberation Sans',sans-serif;font-size:14px;font-weight:700;font-style:normal;color:#fff;line-height:20px;">MRI</div>
<div class="t" style="left:219.70px;width:400px;text-align:right;top:-3.65px;font-family:'Liberation Sans',sans-serif;font-size:14px;font-weight:700;font-style:normal;color:#fff;line-height:20px;">PDI</div>
<div class="t" style="left:325.45px;width:400px;text-align:right;top:-3.65px;font-family:'Liberation Sans',sans-serif;font-size:14px;font-weight:700;font-style:normal;color:#fff;line-height:20px;">PC</div>
<div class="t" style="left:474.70px;width:400px;text-align:right;top:-3.65px;font-family:'Liberation Sans',sans-serif;font-size:14px;font-weight:700;font-style:normal;color:#fff;line-height:20px;">Total</div>
<div class="t" style="left:682.20px;width:400px;text-align:right;top:-3.65px;font-family:'Liberation Sans',sans-serif;font-size:14px;font-weight:700;font-style:normal;color:#fff;line-height:20px;">Balance</div>
<div class="t" style="left:39.50px;top:17.29px;font-family:'Liberation Sans',sans-serif;font-size:13.6px;font-weight:400;font-style:italic;color:#f2f2f2;line-height:20px;">1ST DISBURSE</div>
<div class="t" style="left:683.40px;width:400px;text-align:right;top:16.29px;font-family:'Liberation Sans',sans-serif;font-size:14px;font-weight:400;font-style:normal;color:#f2f2f2;line-height:20px;">1,000,000.00</div>
<div class="t" style="left:39.50px;top:36.23px;font-family:'Liberation Sans',sans-serif;font-size:14px;font-weight:400;font-style:normal;color:#f2f2f2;line-height:20px;letter-spacing:0.22px;">21-Okt-11</div>
<div class="t" style="left:-86.50px;width:400px;text-align:right;top:36.23px;font-family:'Liberation Sans',sans-serif;font-size:14px;font-weight:400;font-style:normal;color:#f2f2f2;line-height:20px;">-500,000.00</div>
<div class="t" style="left:474.50px;width:400px;text-align:right;top:36.23px;font-family:'Liberation Sans',sans-serif;font-size:14px;font-weight:400;font-style:normal;color:#f2f2f2;line-height:20px;">-500,000.00</div>
<div class="t" style="left:683.40px;width:400px;text-align:right;top:36.23px;font-family:'Liberation Sans',sans-serif;font-size:14px;font-weight:400;font-style:normal;color:#f2f2f2;line-height:20px;">1,500,000.00</div>
<div class="t" style="left:-89.50px;width:400px;text-align:right;top:57.17px;font-family:'Liberation Sans',sans-serif;font-size:13.6px;font-weight:400;font-style:italic;color:#f2f2f2;line-height:20px;">2ND DISBURSE</div>
<div class="t" style="left:39.50px;top:76.11px;font-family:'Liberation Sans',sans-serif;font-size:14px;font-weight:400;font-style:normal;color:#f2f2f2;line-height:20px;letter-spacing:0.22px;">5-Dis-11</div>
<div class="t" style="left:-86.50px;width:400px;text-align:right;top:76.11px;font-family:'Liberation Sans',sans-serif;font-size:14px;font-weight:400;font-style:normal;color:#f2f2f2;line-height:20px;">-500,000.00</div>
<div class="t" style="left:474.50px;width:400px;text-align:right;top:76.11px;font-family:'Liberation Sans',sans-serif;font-size:14px;font-weight:400;font-style:normal;color:#f2f2f2;line-height:20px;">-500,000.00</div>
<div class="t" style="left:683.40px;width:400px;text-align:right;top:76.11px;font-family:'Liberation Sans',sans-serif;font-size:14px;font-weight:400;font-style:normal;color:#f2f2f2;line-height:20px;">2,000,000.00</div>
<div class="t" style="left:-89.50px;width:400px;text-align:right;top:97.05px;font-family:'Liberation Sans',sans-serif;font-size:13.6px;font-weight:400;font-style:italic;color:#f2f2f2;line-height:20px;">3RD DISBURSE</div>
<div class="t" style="left:39.50px;top:115.99px;font-family:'Liberation Sans',sans-serif;font-size:14px;font-weight:400;font-style:normal;color:#f2f2f2;line-height:20px;letter-spacing:0.22px;">29-Dis-11</div>
<div class="t" style="left:-86.50px;width:400px;text-align:right;top:115.99px;font-family:'Liberation Sans',sans-serif;font-size:14px;font-weight:400;font-style:normal;color:#f2f2f2;line-height:20px;">-500,000.00</div>
<div class="t" style="left:474.50px;width:400px;text-align:right;top:115.99px;font-family:'Liberation Sans',sans-serif;font-size:14px;font-weight:400;font-style:normal;color:#f2f2f2;line-height:20px;">-500,000.00</div>
<div class="t" style="left:683.40px;width:400px;text-align:right;top:115.99px;font-family:'Liberation Sans',sans-serif;font-size:14px;font-weight:400;font-style:normal;color:#f2f2f2;line-height:20px;">2,500,000.00</div>
<div class="t" style="left:-89.50px;width:400px;text-align:right;top:136.93px;font-family:'Liberation Sans',sans-serif;font-size:13.6px;font-weight:400;font-style:italic;color:#f2f2f2;line-height:20px;">4TH DISBURSE</div>
<div class="t" style="left:39.50px;top:155.87px;font-family:'Liberation Sans',sans-serif;font-size:14px;font-weight:400;font-style:normal;color:#f2f2f2;line-height:20px;letter-spacing:0.22px;">21-Set-11</div>
<div class="t" style="left:137.75px;width:400px;text-align:right;top:155.87px;font-family:'Liberation Sans',sans-serif;font-size:14px;font-weight:400;font-style:normal;color:#f2f2f2;line-height:20px;">1,250.00</div>
<div class="t" style="left:474.50px;width:400px;text-align:right;top:155.87px;font-family:'Liberation Sans',sans-serif;font-size:14px;font-weight:400;font-style:normal;color:#f2f2f2;line-height:20px;">1,250.00</div>
<div class="t" style="left:683.40px;width:400px;text-align:right;top:155.87px;font-family:'Liberation Sans',sans-serif;font-size:14px;font-weight:400;font-style:normal;color:#f2f2f2;line-height:20px;">2,500,000.00</div>
<div class="t" style="left:39.50px;top:175.81px;font-family:'Liberation Sans',sans-serif;font-size:14px;font-weight:400;font-style:normal;color:#f2f2f2;line-height:20px;letter-spacing:0.22px;">21-Okt-11</div>
<div class="t" style="left:33.00px;width:400px;text-align:right;top:175.81px;font-family:'Liberation Sans',sans-serif;font-size:14px;font-weight:400;font-style:normal;color:#f2f2f2;line-height:20px;">6,875.00</div>
<div class="t" style="left:137.75px;width:400px;text-align:right;top:175.81px;font-family:'Liberation Sans',sans-serif;font-size:14px;font-weight:400;font-style:normal;color:#f2f2f2;line-height:20px;">750</div>
<div class="t" style="left:474.50px;width:400px;text-align:right;top:175.81px;font-family:'Liberation Sans',sans-serif;font-size:14px;font-weight:400;font-style:normal;color:#f2f2f2;line-height:20px;">7,625.00</div>
<div class="t" style="left:683.40px;width:400px;text-align:right;top:175.81px;font-family:'Liberation Sans',sans-serif;font-size:14px;font-weight:400;font-style:normal;color:#f2f2f2;line-height:20px;">2,500,000.00</div>
<div class="t" style="left:39.50px;top:195.75px;font-family:'Liberation Sans',sans-serif;font-size:14px;font-weight:400;font-style:normal;color:#f2f2f2;line-height:20px;letter-spacing:0.22px;">5-Dis-11</div>
<div class="t" style="left:33.00px;width:400px;text-align:right;top:195.75px;font-family:'Liberation Sans',sans-serif;font-size:14px;font-weight:400;font-style:normal;color:#f2f2f2;line-height:20px;">15,468.75</div>
<div class="t" style="left:137.75px;width:400px;text-align:right;top:195.75px;font-family:'Liberation Sans',sans-serif;font-size:14px;font-weight:400;font-style:normal;color:#f2f2f2;line-height:20px;">1,750.00</div>
<div class="t" style="left:474.50px;width:400px;text-align:right;top:195.75px;font-family:'Liberation Sans',sans-serif;font-size:14px;font-weight:400;font-style:normal;color:#f2f2f2;line-height:20px;">17,218.75</div>
<div class="t" style="left:683.40px;width:400px;text-align:right;top:195.75px;font-family:'Liberation Sans',sans-serif;font-size:14px;font-weight:400;font-style:normal;color:#f2f2f2;line-height:20px;">2,500,000.00</div>
<div class="t" style="left:39.50px;top:215.69px;font-family:'Liberation Sans',sans-serif;font-size:14px;font-weight:400;font-style:normal;color:#f2f2f2;line-height:20px;letter-spacing:0.22px;">29-Dis-11</div>
<div class="t" style="left:33.00px;width:400px;text-align:right;top:215.69px;font-family:'Liberation Sans',sans-serif;font-size:14px;font-weight:400;font-style:normal;color:#f2f2f2;line-height:20px;">11,000.00</div>
<div class="t" style="left:137.75px;width:400px;text-align:right;top:215.69px;font-family:'Liberation Sans',sans-serif;font-size:14px;font-weight:400;font-style:normal;color:#f2f2f2;line-height:20px;">250</div>
<div class="t" style="left:474.50px;width:400px;text-align:right;top:215.69px;font-family:'Liberation Sans',sans-serif;font-size:14px;font-weight:400;font-style:normal;color:#f2f2f2;line-height:20px;">11,250.00</div>
<div class="t" style="left:683.40px;width:400px;text-align:right;top:215.69px;font-family:'Liberation Sans',sans-serif;font-size:14px;font-weight:400;font-style:normal;color:#f2f2f2;line-height:20px;">2,500,000.00</div>
<div class="t" style="left:39.50px;top:235.63px;font-family:'Liberation Sans',sans-serif;font-size:14px;font-weight:400;font-style:normal;color:#f2f2f2;line-height:20px;letter-spacing:0.22px;">31-Ene-12</div>
<div class="t" style="left:-86.50px;width:400px;text-align:right;top:235.63px;font-family:'Liberation Sans',sans-serif;font-size:14px;font-weight:400;font-style:normal;color:#f2f2f2;line-height:20px;">13,983.18</div>
<div class="t" style="left:33.00px;width:400px;text-align:right;top:235.63px;font-family:'Liberation Sans',sans-serif;font-size:14px;font-weight:400;font-style:normal;color:#f2f2f2;line-height:20px;">17,187.50</div>
<div class="t" style="left:137.75px;width:400px;text-align:right;top:235.63px;font-family:'Liberation Sans',sans-serif;font-size:14px;font-weight:400;font-style:normal;color:#f2f2f2;line-height:20px;">1,250.00</div>
<div class="t" style="left:474.50px;width:400px;text-align:right;top:235.63px;font-family:'Liberation Sans',sans-serif;font-size:14px;font-weight:400;font-style:normal;color:#f2f2f2;line-height:20px;">32,420.68</div>
<div class="t" style="left:683.40px;width:400px;text-align:right;top:235.63px;font-family:'Liberation Sans',sans-serif;font-size:14px;font-weight:400;font-style:normal;color:#f2f2f2;line-height:20px;">2,486,016.82</div>
<div class="t" style="left:777.00px;width:400px;text-align:right;top:235.63px;font-family:'Liberation Sans',sans-serif;font-size:14px;font-weight:400;font-style:normal;color:#111;line-height:20px;">1</div>
<div class="t" style="left:39.50px;top:255.57px;font-family:'Liberation Sans',sans-serif;font-size:14px;font-weight:400;font-style:normal;color:#f2f2f2;line-height:20px;letter-spacing:0.22px;">29-Peb-12</div>
<div class="t" style="left:-86.50px;width:400px;text-align:right;top:255.57px;font-family:'Liberation Sans',sans-serif;font-size:14px;font-weight:400;font-style:normal;color:#f2f2f2;line-height:20px;">14,069.70</div>
<div class="t" style="left:33.00px;width:400px;text-align:right;top:255.57px;font-family:'Liberation Sans',sans-serif;font-size:14px;font-weight:400;font-style:normal;color:#f2f2f2;line-height:20px;">17,100.98</div>
<div class="t" style="left:137.75px;width:400px;text-align:right;top:255.57px;font-family:'Liberation Sans',sans-serif;font-size:14px;font-weight:400;font-style:normal;color:#f2f2f2;line-height:20px;">1,250.00</div>
<div class="t" style="left:474.50px;width:400px;text-align:right;top:255.57px;font-family:'Liberation Sans',sans-serif;font-size:14px;font-weight:400;font-style:normal;color:#f2f2f2;line-height:20px;">32,420.68</div>
<div class="t" style="left:683.40px;width:400px;text-align:right;top:255.57px;font-family:'Liberation Sans',sans-serif;font-size:14px;font-weight:400;font-style:normal;color:#f2f2f2;line-height:20px;">2,471,947.12</div>
<div class="t" style="left:777.00px;width:400px;text-align:right;top:255.57px;font-family:'Liberation Sans',sans-serif;font-size:14px;font-weight:400;font-style:normal;color:#111;line-height:20px;">2</div>
<div class="t" style="left:39.50px;top:275.51px;font-family:'Liberation Sans',sans-serif;font-size:14px;font-weight:400;font-style:normal;color:#f2f2f2;line-height:20px;letter-spacing:0.22px;">29-Mar-12</div>
<div class="t" style="left:-86.50px;width:400px;text-align:right;top:275.51px;font-family:'Liberation Sans',sans-serif;font-size:14px;font-weight:400;font-style:normal;color:#f2f2f2;line-height:20px;">14,172.82</div>
<div class="t" style="left:33.00px;width:400px;text-align:right;top:275.51px;font-family:'Liberation Sans',sans-serif;font-size:14px;font-weight:400;font-style:normal;color:#f2f2f2;line-height:20px;">16,997.86</div>
<div class="t" style="left:137.75px;width:400px;text-align:right;top:275.51px;font-family:'Liberation Sans',sans-serif;font-size:14px;font-weight:400;font-style:normal;color:#f2f2f2;line-height:20px;">1,250.00</div>
<div class="t" style="left:474.50px;width:400px;text-align:right;top:275.51px;font-family:'Liberation Sans',sans-serif;font-size:14px;font-weight:400;font-style:normal;color:#f2f2f2;line-height:20px;">32,420.68</div>
<div class="t" style="left:683.40px;width:400px;text-align:right;top:275.51px;font-family:'Liberation Sans',sans-serif;font-size:14px;font-weight:400;font-style:normal;color:#f2f2f2;line-height:20px;">2,457,774.30</div>
<div class="t" style="left:777.00px;width:400px;text-align:right;top:275.51px;font-family:'Liberation Sans',sans-serif;font-size:14px;font-weight:400;font-style:normal;color:#111;line-height:20px;">3</div>
<div class="t" style="left:39.50px;top:295.45px;font-family:'Liberation Sans',sans-serif;font-size:14px;font-weight:400;font-style:normal;color:#f2f2f2;line-height:20px;letter-spacing:0.22px;">28-Abr-12</div>
<div class="t" style="left:-86.50px;width:400px;text-align:right;top:295.45px;font-family:'Liberation Sans',sans-serif;font-size:14px;font-weight:400;font-style:normal;color:#f2f2f2;line-height:20px;">14,270.23</div>
<div class="t" style="left:33.00px;width:400px;text-align:right;top:295.45px;font-family:'Liberation Sans',sans-serif;font-size:14px;font-weight:400;font-style:normal;color:#f2f2f2;line-height:20px;">16,900.45</div>
<div class="t" style="left:137.75px;width:400px;text-align:right;top:295.45px;font-family:'Liberation Sans',sans-serif;font-size:14px;font-weight:400;font-style:normal;color:#f2f2f2;line-height:20px;">1,250.00</div>
<div class="t" style="left:474.50px;width:400px;text-align:right;top:295.45px;font-family:'Liberation Sans',sans-serif;font-size:14px;font-weight:400;font-style:normal;color:#f2f2f2;line-height:20px;">32,420.68</div>
<div class="t" style="left:683.40px;width:400px;text-align:right;top:295.45px;font-family:'Liberation Sans',sans-serif;font-size:14px;font-weight:400;font-style:normal;color:#f2f2f2;line-height:20px;">2,443,504.07</div>
<div class="t" style="left:777.00px;width:400px;text-align:right;top:295.45px;font-family:'Liberation Sans',sans-serif;font-size:14px;font-weight:400;font-style:normal;color:#111;line-height:20px;">4</div>
<div class="t" style="left:39.50px;top:315.39px;font-family:'Liberation Sans',sans-serif;font-size:14px;font-weight:400;font-style:normal;color:#f2f2f2;line-height:20px;letter-spacing:0.22px;">28-May-12</div>
<div class="t" style="left:-86.50px;width:400px;text-align:right;top:315.39px;font-family:'Liberation Sans',sans-serif;font-size:14px;font-weight:400;font-style:normal;color:#f2f2f2;line-height:20px;">14,371.59</div>
<div class="t" style="left:33.00px;width:400px;text-align:right;top:315.39px;font-family:'Liberation Sans',sans-serif;font-size:14px;font-weight:400;font-style:normal;color:#f2f2f2;line-height:20px;">16,799.09</div>
<div class="t" style="left:137.75px;width:400px;text-align:right;top:315.39px;font-family:'Liberation Sans',sans-serif;font-size:14px;font-weight:400;font-style:normal;color:#f2f2f2;line-height:20px;">1,250.00</div>
<div class="t" style="left:474.50px;width:400px;text-align:right;top:315.39px;font-family:'Liberation Sans',sans-serif;font-size:14px;font-weight:400;font-style:normal;color:#f2f2f2;line-height:20px;">32,420.68</div>
<div class="t" style="left:683.40px;width:400px;text-align:right;top:315.39px;font-family:'Liberation Sans',sans-serif;font-size:14px;font-weight:400;font-style:normal;color:#f2f2f2;line-height:20px;">2,429,132.48</div>
<div class="t" style="left:777.00px;width:400px;text-align:right;top:315.39px;font-family:'Liberation Sans',sans-serif;font-size:14px;font-weight:400;font-style:normal;color:#111;line-height:20px;">5</div>
<div class="t" style="left:39.50px;top:335.33px;font-family:'Liberation Sans',sans-serif;font-size:14px;font-weight:400;font-style:normal;color:#f2f2f2;line-height:20px;letter-spacing:0.22px;">28-Hun-12</div>
<div class="t" style="left:-86.50px;width:400px;text-align:right;top:335.33px;font-family:'Liberation Sans',sans-serif;font-size:14px;font-weight:400;font-style:normal;color:#f2f2f2;line-height:20px;">14,470.40</div>
<div class="t" style="left:33.00px;width:400px;text-align:right;top:335.33px;font-family:'Liberation Sans',sans-serif;font-size:14px;font-weight:400;font-style:normal;color:#f2f2f2;line-height:20px;">16,700.28</div>
<div class="t" style="left:137.75px;width:400px;text-align:right;top:335.33px;font-family:'Liberation Sans',sans-serif;font-size:14px;font-weight:400;font-style:normal;color:#f2f2f2;line-height:20px;">1,250.00</div>
<div class="t" style="left:474.50px;width:400px;text-align:right;top:335.33px;font-family:'Liberation Sans',sans-serif;font-size:14px;font-weight:400;font-style:normal;color:#f2f2f2;line-height:20px;">32,420.68</div>
<div class="t" style="left:683.40px;width:400px;text-align:right;top:335.33px;font-family:'Liberation Sans',sans-serif;font-size:14px;font-weight:400;font-style:normal;color:#f2f2f2;line-height:20px;">2,414,662.08</div>
<div class="t" style="left:777.00px;width:400px;text-align:right;top:335.33px;font-family:'Liberation Sans',sans-serif;font-size:14px;font-weight:400;font-style:normal;color:#111;line-height:20px;">6</div>
<div class="t" style="left:39.50px;top:355.27px;font-family:'Liberation Sans',sans-serif;font-size:14px;font-weight:400;font-style:normal;color:#f2f2f2;line-height:20px;letter-spacing:0.22px;">28-Hul-12</div>
<div class="t" style="left:-86.50px;width:400px;text-align:right;top:355.27px;font-family:'Liberation Sans',sans-serif;font-size:14px;font-weight:400;font-style:normal;color:#f2f2f2;line-height:20px;">14,569.87</div>
<div class="t" style="left:33.00px;width:400px;text-align:right;top:355.27px;font-family:'Liberation Sans',sans-serif;font-size:14px;font-weight:400;font-style:normal;color:#f2f2f2;line-height:20px;">16,600.81</div>
<div class="t" style="left:137.75px;width:400px;text-align:right;top:355.27px;font-family:'Liberation Sans',sans-serif;font-size:14px;font-weight:400;font-style:normal;color:#f2f2f2;line-height:20px;">1,250.00</div>
<div class="t" style="left:474.50px;width:400px;text-align:right;top:355.27px;font-family:'Liberation Sans',sans-serif;font-size:14px;font-weight:400;font-style:normal;color:#f2f2f2;line-height:20px;">32,420.68</div>
<div class="t" style="left:683.40px;width:400px;text-align:right;top:355.27px;font-family:'Liberation Sans',sans-serif;font-size:14px;font-weight:400;font-style:normal;color:#f2f2f2;line-height:20px;">2,400,092.21</div>
<div class="t" style="left:777.00px;width:400px;text-align:right;top:355.27px;font-family:'Liberation Sans',sans-serif;font-size:14px;font-weight:400;font-style:normal;color:#111;line-height:20px;">7</div>
<div class="t" style="left:39.50px;top:375.21px;font-family:'Liberation Sans',sans-serif;font-size:14px;font-weight:400;font-style:normal;color:#f2f2f2;line-height:20px;letter-spacing:0.22px;">28-Ago-12</div>
<div class="t" style="left:-86.50px;width:400px;text-align:right;top:375.21px;font-family:'Liberation Sans',sans-serif;font-size:14px;font-weight:400;font-style:normal;color:#f2f2f2;line-height:20px;">14,670.05</div>
<div class="t" style="left:33.00px;width:400px;text-align:right;top:375.21px;font-family:'Liberation Sans',sans-serif;font-size:14px;font-weight:400;font-style:normal;color:#f2f2f2;line-height:20px;">16,500.63</div>
<div class="t" style="left:137.75px;width:400px;text-align:right;top:375.21px;font-family:'Liberation Sans',sans-serif;font-size:14px;font-weight:400;font-style:normal;color:#f2f2f2;line-height:20px;">1,250.00</div>
<div class="t" style="left:474.50px;width:400px;text-align:right;top:375.21px;font-family:'Liberation Sans',sans-serif;font-size:14px;font-weight:400;font-style:normal;color:#f2f2f2;line-height:20px;">32,420.68</div>
<div class="t" style="left:683.40px;width:400px;text-align:right;top:375.21px;font-family:'Liberation Sans',sans-serif;font-size:14px;font-weight:400;font-style:normal;color:#f2f2f2;line-height:20px;">2,385,422.16</div>
<div class="t" style="left:777.00px;width:400px;text-align:right;top:375.21px;font-family:'Liberation Sans',sans-serif;font-size:14px;font-weight:400;font-style:normal;color:#111;line-height:20px;">8</div>
<div class="t" style="left:39.50px;top:395.15px;font-family:'Liberation Sans',sans-serif;font-size:14px;font-weight:400;font-style:normal;color:#f2f2f2;line-height:20px;letter-spacing:0.22px;">28-Set-12</div>
<div class="t" style="left:-86.50px;width:400px;text-align:right;top:395.15px;font-family:'Liberation Sans',sans-serif;font-size:14px;font-weight:400;font-style:normal;color:#f2f2f2;line-height:20px;">14,770.90</div>
<div class="t" style="left:33.00px;width:400px;text-align:right;top:395.15px;font-family:'Liberation Sans',sans-serif;font-size:14px;font-weight:400;font-style:normal;color:#f2f2f2;line-height:20px;">16,399.78</div>
<div class="t" style="left:137.75px;width:400px;text-align:right;top:395.15px;font-family:'Liberation Sans',sans-serif;font-size:14px;font-weight:400;font-style:normal;color:#f2f2f2;line-height:20px;">1,250.00</div>
<div class="t" style="left:474.50px;width:400px;text-align:right;top:395.15px;font-family:'Liberation Sans',sans-serif;font-size:14px;font-weight:400;font-style:normal;color:#f2f2f2;line-height:20px;">32,420.68</div>
<div class="t" style="left:683.40px;width:400px;text-align:right;top:395.15px;font-family:'Liberation Sans',sans-serif;font-size:14px;font-weight:400;font-style:normal;color:#f2f2f2;line-height:20px;">2,370,651.26</div>
<div class="t" style="left:777.00px;width:400px;text-align:right;top:395.15px;font-family:'Liberation Sans',sans-serif;font-size:14px;font-weight:400;font-style:normal;color:#111;line-height:20px;">9</div>
<div class="t" style="left:39.50px;top:415.09px;font-family:'Liberation Sans',sans-serif;font-size:14px;font-weight:400;font-style:normal;color:#f2f2f2;line-height:20px;letter-spacing:0.22px;">28-Okt-12</div>
<div class="t" style="left:-86.50px;width:400px;text-align:right;top:415.09px;font-family:'Liberation Sans',sans-serif;font-size:14px;font-weight:400;font-style:normal;color:#f2f2f2;line-height:20px;">14,872.46</div>
<div class="t" style="left:33.00px;width:400px;text-align:right;top:415.09px;font-family:'Liberation Sans',sans-serif;font-size:14px;font-weight:400;font-style:normal;color:#f2f2f2;line-height:20px;">16,298.22</div>
<div class="t" style="left:137.75px;width:400px;text-align:right;top:415.09px;font-family:'Liberation Sans',sans-serif;font-size:14px;font-weight:400;font-style:normal;color:#f2f2f2;line-height:20px;">1,250.00</div>
<div class="t" style="left:474.50px;width:400px;text-align:right;top:415.09px;font-family:'Liberation Sans',sans-serif;font-size:14px;font-weight:400;font-style:normal;color:#f2f2f2;line-height:20px;">32,420.68</div>
<div class="t" style="left:683.40px;width:400px;text-align:right;top:415.09px;font-family:'Liberation Sans',sans-serif;font-size:14px;font-weight:400;font-style:normal;color:#f2f2f2;line-height:20px;">2,355,778.80</div>
<div class="t" style="left:777.00px;width:400px;text-align:right;top:415.09px;font-family:'Liberation Sans',sans-serif;font-size:14px;font-weight:400;font-style:normal;color:#111;line-height:20px;">10</div>
<div class="t" style="left:39.50px;top:435.03px;font-family:'Liberation Sans',sans-serif;font-size:14px;font-weight:400;font-style:normal;color:#f2f2f2;line-height:20px;letter-spacing:0.22px;">28-Nob-12</div>
<div class="t" style="left:-86.50px;width:400px;text-align:right;top:435.03px;font-family:'Liberation Sans',sans-serif;font-size:14px;font-weight:400;font-style:normal;color:#f2f2f2;line-height:20px;">14,974.70</div>
<div class="t" style="left:33.00px;width:400px;text-align:right;top:435.03px;font-family:'Liberation Sans',sans-serif;font-size:14px;font-weight:400;font-style:normal;color:#f2f2f2;line-height:20px;">16,195.98</div>
<div class="t" style="left:137.75px;width:400px;text-align:right;top:435.03px;font-family:'Liberation Sans',sans-serif;font-size:14px;font-weight:400;font-style:normal;color:#f2f2f2;line-height:20px;">1,250.00</div>
<div class="t" style="left:474.50px;width:400px;text-align:right;top:435.03px;font-family:'Liberation Sans',sans-serif;font-size:14px;font-weight:400;font-style:normal;color:#f2f2f2;line-height:20px;">32,420.68</div>
<div class="t" style="left:683.40px;width:400px;text-align:right;top:435.03px;font-family:'Liberation Sans',sans-serif;font-size:14px;font-weight:400;font-style:normal;color:#f2f2f2;line-height:20px;">2,340,804.10</div>
<div class="t" style="left:777.00px;width:400px;text-align:right;top:435.03px;font-family:'Liberation Sans',sans-serif;font-size:14px;font-weight:400;font-style:normal;color:#111;line-height:20px;">11</div>
<div class="t" style="left:39.50px;top:454.97px;font-family:'Liberation Sans',sans-serif;font-size:14px;font-weight:400;font-style:normal;color:#f2f2f2;line-height:20px;letter-spacing:0.22px;">28-Dis-12</div>
<div class="t" style="left:-86.50px;width:400px;text-align:right;top:454.97px;font-family:'Liberation Sans',sans-serif;font-size:14px;font-weight:400;font-style:normal;color:#f2f2f2;line-height:20px;">15,077.65</div>
<div class="t" style="left:33.00px;width:400px;text-align:right;top:454.97px;font-family:'Liberation Sans',sans-serif;font-size:14px;font-weight:400;font-style:normal;color:#f2f2f2;line-height:20px;">16,093.03</div>
<div class="t" style="left:137.75px;width:400px;text-align:right;top:454.97px;font-family:'Liberation Sans',sans-serif;font-size:14px;font-weight:400;font-style:normal;color:#f2f2f2;line-height:20px;">1,250.00</div>
<div class="t" style="left:474.50px;width:400px;text-align:right;top:454.97px;font-family:'Liberation Sans',sans-serif;font-size:14px;font-weight:400;font-style:normal;color:#f2f2f2;line-height:20px;">32,420.68</div>
<div class="t" style="left:683.40px;width:400px;text-align:right;top:454.97px;font-family:'Liberation Sans',sans-serif;font-size:14px;font-weight:400;font-style:normal;color:#f2f2f2;line-height:20px;">2,325,726.45</div>
<div class="t" style="left:777.00px;width:400px;text-align:right;top:454.97px;font-family:'Liberation Sans',sans-serif;font-size:14px;font-weight:400;font-style:normal;color:#111;line-height:20px;">12</div>
<div class="t" style="left:39.50px;top:474.91px;font-family:'Liberation Sans',sans-serif;font-size:14px;font-weight:400;font-style:normal;color:#f2f2f2;line-height:20px;letter-spacing:0.22px;">28-Ene-13</div>
<div class="t" style="left:-86.50px;width:400px;text-align:right;top:474.91px;font-family:'Liberation Sans',sans-serif;font-size:14px;font-weight:400;font-style:normal;color:#f2f2f2;line-height:20px;">15,181.31</div>
<div class="t" style="left:33.00px;width:400px;text-align:right;top:474.91px;font-family:'Liberation Sans',sans-serif;font-size:14px;font-weight:400;font-style:normal;color:#f2f2f2;line-height:20px;">15,989.37</div>
<div class="t" style="left:137.75px;width:400px;text-align:right;top:474.91px;font-family:'Liberation Sans',sans-serif;font-size:14px;font-weight:400;font-style:normal;color:#f2f2f2;line-height:20px;">1,250.00</div>
<div class="t" style="left:474.50px;width:400px;text-align:right;top:474.91px;font-family:'Liberation Sans',sans-serif;font-size:14px;font-weight:400;font-style:normal;color:#f2f2f2;line-height:20px;">32,420.68</div>
<div class="t" style="left:683.40px;width:400px;text-align:right;top:474.91px;font-family:'Liberation Sans',sans-serif;font-size:14px;font-weight:400;font-style:normal;color:#f2f2f2;line-height:20px;">2,310,545.14</div>
<div class="t" style="left:777.00px;width:400px;text-align:right;top:474.91px;font-family:'Liberation Sans',sans-serif;font-size:14px;font-weight:400;font-style:normal;color:#111;line-height:20px;">13</div>
<div class="t" style="left:39.50px;top:494.85px;font-family:'Liberation Sans',sans-serif;font-size:14px;font-weight:400;font-style:normal;color:#f2f2f2;line-height:20px;letter-spacing:0.22px;">28-Peb-13</div>
<div class="t" style="left:-86.50px;width:400px;text-align:right;top:494.85px;font-family:'Liberation Sans',sans-serif;font-size:14px;font-weight:400;font-style:normal;color:#f2f2f2;line-height:20px;">15,285.68</div>
<div class="t" style="left:33.00px;width:400px;text-align:right;top:494.85px;font-family:'Liberation Sans',sans-serif;font-size:14px;font-weight:400;font-style:normal;color:#f2f2f2;line-height:20px;">15,885.00</div>
<div class="t" style="left:137.75px;width:400px;text-align:right;top:494.85px;font-family:'Liberation Sans',sans-serif;font-size:14px;font-weight:400;font-style:normal;color:#f2f2f2;line-height:20px;">1,250.00</div>
<div class="t" style="left:474.50px;width:400px;text-align:right;top:494.85px;font-family:'Liberation Sans',sans-serif;font-size:14px;font-weight:400;font-style:normal;color:#f2f2f2;line-height:20px;">32,420.68</div>
<div class="t" style="left:683.40px;width:400px;text-align:right;top:494.85px;font-family:'Liberation Sans',sans-serif;font-size:14px;font-weight:400;font-style:normal;color:#f2f2f2;line-height:20px;">2,295,259.46</div>
<div class="t" style="left:777.00px;width:400px;text-align:right;top:494.85px;font-family:'Liberation Sans',sans-serif;font-size:14px;font-weight:400;font-style:normal;color:#111;line-height:20px;">14</div>
<div class="t" style="left:39.50px;top:514.79px;font-family:'Liberation Sans',sans-serif;font-size:14px;font-weight:400;font-style:normal;color:#f2f2f2;line-height:20px;letter-spacing:0.22px;">28-Mar-13</div>
<div class="t" style="left:-86.50px;width:400px;text-align:right;top:514.79px;font-family:'Liberation Sans',sans-serif;font-size:14px;font-weight:400;font-style:normal;color:#f2f2f2;line-height:20px;">15,390.77</div>
<div class="t" style="left:33.00px;width:400px;text-align:right;top:514.79px;font-family:'Liberation Sans',sans-serif;font-size:14px;font-weight:400;font-style:normal;color:#f2f2f2;line-height:20px;">15,779.91</div>
<div class="t" style="left:137.75px;width:400px;text-align:right;top:514.79px;font-family:'Liberation Sans',sans-serif;font-size:14px;font-weight:400;font-style:normal;color:#f2f2f2;line-height:20px;">1,250.00</div>
<div class="t" style="left:474.50px;width:400px;text-align:right;top:514.79px;font-family:'Liberation Sans',sans-serif;font-size:14px;font-weight:400;font-style:normal;color:#f2f2f2;line-height:20px;">32,420.68</div>
<div class="t" style="left:683.40px;width:400px;text-align:right;top:514.79px;font-family:'Liberation Sans',sans-serif;font-size:14px;font-weight:400;font-style:normal;color:#f2f2f2;line-height:20px;">2,279,868.69</div>
<div class="t" style="left:777.00px;width:400px;text-align:right;top:514.79px;font-family:'Liberation Sans',sans-serif;font-size:14px;font-weight:400;font-style:normal;color:#111;line-height:20px;">15</div>
<div class="t" style="left:39.50px;top:534.73px;font-family:'Liberation Sans',sans-serif;font-size:14px;font-weight:400;font-style:normal;color:#f2f2f2;line-height:20px;letter-spacing:0.22px;">28-Abr-13</div>
<div class="t" style="left:-86.50px;width:400px;text-align:right;top:534.73px;font-family:'Liberation Sans',sans-serif;font-size:14px;font-weight:400;font-style:normal;color:#f2f2f2;line-height:20px;">15,496.59</div>
<div class="t" style="left:33.00px;width:400px;text-align:right;top:534.73px;font-family:'Liberation Sans',sans-serif;font-size:14px;font-weight:400;font-style:normal;color:#f2f2f2;line-height:20px;">15,674.09</div>
<div class="t" style="left:137.75px;width:400px;text-align:right;top:534.73px;font-family:'Liberation Sans',sans-serif;font-size:14px;font-weight:400;font-style:normal;color:#f2f2f2;line-height:20px;">1,250.00</div>
<div class="t" style="left:474.50px;width:400px;text-align:right;top:534.73px;font-family:'Liberation Sans',sans-serif;font-size:14px;font-weight:400;font-style:normal;color:#f2f2f2;line-height:20px;">32,420.68</div>
<div class="t" style="left:683.40px;width:400px;text-align:right;top:534.73px;font-family:'Liberation Sans',sans-serif;font-size:14px;font-weight:400;font-style:normal;color:#f2f2f2;line-height:20px;">2,264,372.10</div>
<div class="t" style="left:777.00px;width:400px;text-align:right;top:534.73px;font-family:'Liberation Sans',sans-serif;font-size:14px;font-weight:400;font-style:normal;color:#111;line-height:20px;">16</div>
<div class="t" style="left:39.50px;top:554.67px;font-family:'Liberation Sans',sans-serif;font-size:14px;font-weight:400;font-style:normal;color:#f2f2f2;line-height:20px;letter-spacing:0.22px;">28-May-13</div>
<div class="t" style="left:-86.50px;width:400px;text-align:right;top:554.67px;font-family:'Liberation Sans',sans-serif;font-size:14px;font-weight:400;font-style:normal;color:#f2f2f2;line-height:20px;">15,603.12</div>
<div class="t" style="left:33.00px;width:400px;text-align:right;top:554.67px;font-family:'Liberation Sans',sans-serif;font-size:14px;font-weight:400;font-style:normal;color:#f2f2f2;line-height:20px;">15,567.56</div>
<div class="t" style="left:137.75px;width:400px;text-align:right;top:554.67px;font-family:'Liberation Sans',sans-serif;font-size:14px;font-weight:400;font-style:normal;color:#f2f2f2;line-height:20px;">1,250.00</div>
<div class="t" style="left:474.50px;width:400px;text-align:right;top:554.67px;font-family:'Liberation Sans',sans-serif;font-size:14px;font-weight:400;font-style:normal;color:#f2f2f2;line-height:20px;">32,420.68</div>
<div class="t" style="left:683.40px;width:400px;text-align:right;top:554.67px;font-family:'Liberation Sans',sans-serif;font-size:14px;font-weight:400;font-style:normal;color:#f2f2f2;line-height:20px;">2,248,768.98</div>
<div class="t" style="left:777.00px;width:400px;text-align:right;top:554.67px;font-family:'Liberation Sans',sans-serif;font-size:14px;font-weight:400;font-style:normal;color:#111;line-height:20px;">17</div>
<div class="t" style="left:39.50px;top:574.61px;font-family:'Liberation Sans',sans-serif;font-size:14px;font-weight:400;font-style:normal;color:#f2f2f2;line-height:20px;letter-spacing:0.22px;">28-Hun-13</div>
<div class="t" style="left:-86.50px;width:400px;text-align:right;top:574.61px;font-family:'Liberation Sans',sans-serif;font-size:14px;font-weight:400;font-style:normal;color:#f2f2f2;line-height:20px;">15,710.39</div>
<div class="t" style="left:33.00px;width:400px;text-align:right;top:574.61px;font-family:'Liberation Sans',sans-serif;font-size:14px;font-weight:400;font-style:normal;color:#f2f2f2;line-height:20px;">15,460.29</div>
<div class="t" style="left:137.75px;width:400px;text-align:right;top:574.61px;font-family:'Liberation Sans',sans-serif;font-size:14px;font-weight:400;font-style:normal;color:#f2f2f2;line-height:20px;">1,250.00</div>
<div class="t" style="left:474.50px;width:400px;text-align:right;top:574.61px;font-family:'Liberation Sans',sans-serif;font-size:14px;font-weight:400;font-style:normal;color:#f2f2f2;line-height:20px;">32,420.68</div>
<div class="t" style="left:683.40px;width:400px;text-align:right;top:574.61px;font-family:'Liberation Sans',sans-serif;font-size:14px;font-weight:400;font-style:normal;color:#f2f2f2;line-height:20px;">2,233,058.59</div>
<div class="t" style="left:777.00px;width:400px;text-align:right;top:574.61px;font-family:'Liberation Sans',sans-serif;font-size:14px;font-weight:400;font-style:normal;color:#111;line-height:20px;">18</div>
<div class="t" style="left:39.50px;top:594.55px;font-family:'Liberation Sans',sans-serif;font-size:14px;font-weight:400;font-style:normal;color:#f2f2f2;line-height:20px;letter-spacing:0.22px;">28-Hul-13</div>
<div class="t" style="left:-86.50px;width:400px;text-align:right;top:594.55px;font-family:'Liberation Sans',sans-serif;font-size:14px;font-weight:400;font-style:normal;color:#f2f2f2;line-height:20px;">15,818.40</div>
<div class="t" style="left:33.00px;width:400px;text-align:right;top:594.55px;font-family:'Liberation Sans',sans-serif;font-size:14px;font-weight:400;font-style:normal;color:#f2f2f2;line-height:20px;">15,352.28</div>
<div class="t" style="left:137.75px;width:400px;text-align:right;top:594.55px;font-family:'Liberation Sans',sans-serif;font-size:14px;font-weight:400;font-style:normal;color:#f2f2f2;line-height:20px;">1,250.00</div>
<div class="t" style="left:474.50px;width:400px;text-align:right;top:594.55px;font-family:'Liberation Sans',sans-serif;font-size:14px;font-weight:400;font-style:normal;color:#f2f2f2;line-height:20px;">32,420.68</div>
<div class="t" style="left:683.40px;width:400px;text-align:right;top:594.55px;font-family:'Liberation Sans',sans-serif;font-size:14px;font-weight:400;font-style:normal;color:#f2f2f2;line-height:20px;">2,217,240.19</div>
<div class="t" style="left:777.00px;width:400px;text-align:right;top:594.55px;font-family:'Liberation Sans',sans-serif;font-size:14px;font-weight:400;font-style:normal;color:#111;line-height:20px;">19</div>
<div class="t" style="left:39.50px;top:614.49px;font-family:'Liberation Sans',sans-serif;font-size:14px;font-weight:400;font-style:normal;color:#f2f2f2;line-height:20px;letter-spacing:0.22px;">28-Ago-13</div>
<div class="t" style="left:-86.50px;width:400px;text-align:right;top:614.49px;font-family:'Liberation Sans',sans-serif;font-size:14px;font-weight:400;font-style:normal;color:#f2f2f2;line-height:20px;">15,927.16</div>
<div class="t" style="left:33.00px;width:400px;text-align:right;top:614.49px;font-family:'Liberation Sans',sans-serif;font-size:14px;font-weight:400;font-style:normal;color:#f2f2f2;line-height:20px;">15,243.52</div>
<div class="t" style="left:137.75px;width:400px;text-align:right;top:614.49px;font-family:'Liberation Sans',sans-serif;font-size:14px;font-weight:400;font-style:normal;color:#f2f2f2;line-height:20px;">1,250.00</div>
<div class="t" style="left:474.50px;width:400px;text-align:right;top:614.49px;font-family:'Liberation Sans',sans-serif;font-size:14px;font-weight:400;font-style:normal;color:#f2f2f2;line-height:20px;">32,420.68</div>
<div class="t" style="left:683.40px;width:400px;text-align:right;top:614.49px;font-family:'Liberation Sans',sans-serif;font-size:14px;font-weight:400;font-style:normal;color:#f2f2f2;line-height:20px;">2,201,313.03</div>
<div class="t" style="left:777.00px;width:400px;text-align:right;top:614.49px;font-family:'Liberation Sans',sans-serif;font-size:14px;font-weight:400;font-style:normal;color:#111;line-height:20px;">20</div>
<div class="t" style="left:39.50px;top:634.43px;font-family:'Liberation Sans',sans-serif;font-size:14px;font-weight:400;font-style:normal;color:#f2f2f2;line-height:20px;letter-spacing:0.22px;">28-Set-13</div>
<div class="t" style="left:-86.50px;width:400px;text-align:right;top:634.43px;font-family:'Liberation Sans',sans-serif;font-size:14px;font-weight:400;font-style:normal;color:#f2f2f2;line-height:20px;">16,036.65</div>
<div class="t" style="left:33.00px;width:400px;text-align:right;top:634.43px;font-family:'Liberation Sans',sans-serif;font-size:14px;font-weight:400;font-style:normal;color:#f2f2f2;line-height:20px;">15,134.03</div>
<div class="t" style="left:137.75px;width:400px;text-align:right;top:634.43px;font-family:'Liberation Sans',sans-serif;font-size:14px;font-weight:400;font-style:normal;color:#f2f2f2;line-height:20px;">1,250.00</div>
<div class="t" style="left:474.50px;width:400px;text-align:right;top:634.43px;font-family:'Liberation Sans',sans-serif;font-size:14px;font-weight:400;font-style:normal;color:#f2f2f2;line-height:20px;">32,420.68</div>
<div class="t" style="left:683.40px;width:400px;text-align:right;top:634.43px;font-family:'Liberation Sans',sans-serif;font-size:14px;font-weight:400;font-style:normal;color:#f2f2f2;line-height:20px;">2,185,276.38</div>
<div class="t" style="left:777.00px;width:400px;text-align:right;top:634.43px;font-family:'Liberation Sans',sans-serif;font-size:14px;font-weight:400;font-style:normal;color:#111;line-height:20px;">21</div>
<div class="t" style="left:39.50px;top:654.37px;font-family:'Liberation Sans',sans-serif;font-size:14px;font-weight:400;font-style:normal;color:#f2f2f2;line-height:20px;letter-spacing:0.22px;">28-Okt-13</div>
<div class="t" style="left:-86.50px;width:400px;text-align:right;top:654.37px;font-family:'Liberation Sans',sans-serif;font-size:14px;font-weight:400;font-style:normal;color:#f2f2f2;line-height:20px;">16,146.91</div>
<div class="t" style="left:33.00px;width:400px;text-align:right;top:654.37px;font-family:'Liberation Sans',sans-serif;font-size:14px;font-weight:400;font-style:normal;color:#f2f2f2;line-height:20px;">15,023.77</div>
<div class="t" style="left:137.75px;width:400px;text-align:right;top:654.37px;font-family:'Liberation Sans',sans-serif;font-size:14px;font-weight:400;font-style:normal;color:#f2f2f2;line-height:20px;">1,250.00</div>
<div class="t" style="left:474.50px;width:400px;text-align:right;top:654.37px;font-family:'Liberation Sans',sans-serif;font-size:14px;font-weight:400;font-style:normal;color:#f2f2f2;line-height:20px;">32,420.68</div>
<div class="t" style="left:683.40px;width:400px;text-align:right;top:654.37px;font-family:'Liberation Sans',sans-serif;font-size:14px;font-weight:400;font-style:normal;color:#f2f2f2;line-height:20px;">2,169,129.47</div>
<div class="t" style="left:777.00px;width:400px;text-align:right;top:654.37px;font-family:'Liberation Sans',sans-serif;font-size:14px;font-weight:400;font-style:normal;color:#111;line-height:20px;">22</div>
<div class="t" style="left:39.50px;top:674.31px;font-family:'Liberation Sans',sans-serif;font-size:14px;font-weight:400;font-style:normal;color:#f2f2f2;line-height:20px;letter-spacing:0.22px;">28-Nob-13</div>
<div class="t" style="left:-86.50px;width:400px;text-align:right;top:674.31px;font-family:'Liberation Sans',sans-serif;font-size:14px;font-weight:400;font-style:normal;color:#f2f2f2;line-height:20px;">16,257.91</div>
<div class="t" style="left:33.00px;width:400px;text-align:right;top:674.31px;font-family:'Liberation Sans',sans-serif;font-size:14px;font-weight:400;font-style:normal;color:#f2f2f2;line-height:20px;">14,912.77</div>
<div class="t" style="left:137.75px;width:400px;text-align:right;top:674.31px;font-family:'Liberation Sans',sans-serif;font-size:14px;font-weight:400;font-style:normal;color:#f2f2f2;line-height:20px;">1,250.00</div>
<div class="t" style="left:474.50px;width:400px;text-align:right;top:674.31px;font-family:'Liberation Sans',sans-serif;font-size:14px;font-weight:400;font-style:normal;color:#f2f2f2;line-height:20px;">32,420.68</div>
<div class="t" style="left:683.40px;width:400px;text-align:right;top:674.31px;font-family:'Liberation Sans',sans-serif;font-size:14px;font-weight:400;font-style:normal;color:#f2f2f2;line-height:20px;">2,152,871.56</div>
<div class="t" style="left:777.00px;width:400px;text-align:right;top:674.31px;font-family:'Liberation Sans',sans-serif;font-size:14px;font-weight:400;font-style:normal;color:#111;line-height:20px;">23</div>
<div class="t" style="left:39.50px;top:694.25px;font-family:'Liberation Sans',sans-serif;font-size:14px;font-weight:400;font-style:normal;color:#f2f2f2;line-height:20px;letter-spacing:0.22px;">2-Ene-14</div>
<div class="t" style="left:-86.50px;width:400px;text-align:right;top:694.25px;font-family:'Liberation Sans',sans-serif;font-size:14px;font-weight:400;font-style:normal;color:#f2f2f2;line-height:20px;">16,370.49</div>
<div class="t" style="left:33.00px;width:400px;text-align:right;top:694.25px;font-family:'Liberation Sans',sans-serif;font-size:14px;font-weight:400;font-style:normal;color:#f2f2f2;line-height:20px;">14,800.19</div>
<div class="t" style="left:137.75px;width:400px;text-align:right;top:694.25px;font-family:'Liberation Sans',sans-serif;font-size:14px;font-weight:400;font-style:normal;color:#f2f2f2;line-height:20px;">1,250.00</div>
<div class="t" style="left:474.50px;width:400px;text-align:right;top:694.25px;font-family:'Liberation Sans',sans-serif;font-size:14px;font-weight:400;font-style:normal;color:#f2f2f2;line-height:20px;">32,420.68</div>
<div class="t" style="left:683.40px;width:400px;text-align:right;top:694.25px;font-family:'Liberation Sans',sans-serif;font-size:14px;font-weight:400;font-style:normal;color:#f2f2f2;line-height:20px;">2,136,501.07</div>
<div class="t" style="left:777.00px;width:400px;text-align:right;top:694.25px;font-family:'Liberation Sans',sans-serif;font-size:14px;font-weight:400;font-style:normal;color:#111;line-height:20px;">24</div>
</div>
<div class="r" style="left:144px;top:318.25px;width:1634px;height:1.3px;background:#141414;"></div>
<div class="r" style="left:1193px;top:317px;width:96.5px;height:2.7px;background:#15a572;"></div>
<div class="r" style="left:1783px;top:327px;width:9px;height:1.5px;background:#777;"></div>
<svg class="r" style="left:1783px;top:338px;" width="9" height="8" viewBox="0 0 9 8" fill="none"><path d="M4.5 1 L8.5 7 H0.5 Z" fill="#888"/></svg>
<div class="r" style="left:1783px;top:356.7px;width:9px;height:137.7px;background:#555;border-radius:5px"></div>
<svg class="r" style="left:1783px;top:1002px;" width="9" height="8" viewBox="0 0 9 8" fill="none"><path d="M0.5 1 H8.5 L4.5 7 Z" fill="#888"/></svg>
<div class="r" style="left:108px;top:1019px;width:1690px;height:31px;background:#1f1f1f;"></div>
<div class="r" style="left:108px;top:1018.75px;width:1690px;height:1px;background:#2d2d2d;"></div>
<svg class="r" style="left:123px;top:1027px;" width="15" height="14" viewBox="0 0 15 14" fill="none"><path d="M2.5 1.8 V12.8 M11.8 2.3 L6.8 7.3 L11.8 12.3" stroke="#9a9a9a" stroke-width="2" stroke-linecap="round" stroke-linejoin="round"/></svg>
<svg class="r" style="left:150px;top:1027px;" width="10" height="14" viewBox="0 0 10 14" fill="none"><path d="M7.5 2.3 L2.5 7.3 L7.5 12.3" stroke="#9a9a9a" stroke-width="2" stroke-linecap="round" stroke-linejoin="round"/></svg>
<svg class="r" style="left:177px;top:1027px;" width="10" height="14" viewBox="0 0 10 14" fill="none"><path d="M2.5 2.3 L7.5 7.3 L2.5 12.3" stroke="#9a9a9a" stroke-width="2" stroke-linecap="round" stroke-linejoin="round"/></svg>
<svg class="r" style="left:201px;top:1027px;" width="15" height="14" viewBox="0 0 15 14" fill="none"><path d="M12.5 1.8 V12.8 M2.8 2.3 L7.8 7.3 L2.8 12.3" stroke="#9a9a9a" stroke-width="2" stroke-linecap="round" stroke-linejoin="round"/></svg>
<div class="t" style="left:243.00px;top:1025.00px;font-family:'Liberation Sans',sans-serif;font-size:15.5px;font-weight:400;font-style:normal;color:#d9d9d9;line-height:20px;">amort 1</div>
<div class="t" style="left:326.00px;top:1025.00px;font-family:'Liberation Sans',sans-serif;font-size:16px;font-weight:400;font-style:normal;color:#d9d9d9;line-height:20px;">amort2</div>
<div class="t" style="left:407.00px;top:1025.00px;font-family:'Liberation Sans',sans-serif;font-size:16px;font-weight:400;font-style:normal;color:#d9d9d9;line-height:20px;">amort3</div>
<div class="t" style="left:489.00px;top:1025.00px;font-family:'Liberation Sans',sans-serif;font-size:16px;font-weight:400;font-style:normal;color:#d9d9d9;line-height:20px;">amort4</div>
<div class="r" style="left:309.7px;top:1023.2px;width:1px;height:20.7px;background:#3a3a3a;"></div>
<div class="r" style="left:390.7px;top:1023.2px;width:1px;height:20.7px;background:#3a3a3a;"></div>
<div class="r" style="left:473px;top:1023.2px;width:1px;height:20.7px;background:#3a3a3a;"></div>
<div class="r" style="left:678.7px;top:1023.2px;width:1px;height:20.7px;background:#3a3a3a;"></div>
<div class="r" style="left:552px;top:1019px;width:69px;height:4px;background:#ffffff;"></div>
<div class="r" style="left:548px;top:1019px;width:8px;height:8px;background:#1f1f1f;border-radius:50%"></div>
<div class="r" style="left:617px;top:1019px;width:8px;height:8px;background:#1f1f1f;border-radius:50%"></div>
<div class="r" style="left:556px;top:1019px;width:61px;height:27.7px;background:#ffffff;border-radius:0 0 6px 6px"></div>
<div class="t" style="left:570.70px;top:1024.90px;font-family:'Liberation Sans',sans-serif;font-size:15.2px;font-weight:400;font-style:normal;color:#14a874;line-height:20px;-webkit-text-stroke:0.45px #14a874">HOP</div>
<div class="t" style="left:633.70px;top:1025.00px;font-family:'Liberation Sans',sans-serif;font-size:14.7px;font-weight:400;font-style:normal;color:#d9d9d9;line-height:20px;">ADA</div>
<svg class="r" style="left:685px;top:1028px;" width="14" height="14" viewBox="0 0 14 14" fill="none"><path d="M7 1 V13 M1 7 H13" stroke="#dcdcdc" stroke-width="2"/></svg>
<div class="r" style="left:1620.5px;top:1029px;width:1.5px;height:10px;background:#666;"></div>
<svg class="r" style="left:1636px;top:1029px;" width="7" height="10" viewBox="0 0 7 10" fill="none"><path d="M6.5 0.5 V9.5 L0.5 5 Z" fill="#777"/></svg>
<div class="r" style="left:1653.75px;top:1029px;width:83.25px;height:10px;background:#555;border-radius:5px"></div>
<svg class="r" style="left:1753px;top:1029px;" width="7" height="10" viewBox="0 0 7 10" fill="none"><path d="M0.5 0.5 V9.5 L6.5 5 Z" fill="#777"/></svg>
<div class="r" style="left:1773.5px;top:1029px;width:1.5px;height:10px;background:#666;"></div>
<div class="r" style="left:108px;top:1050px;width:1690px;height:30px;background:#1f1f1f;"></div>
<div class="r" style="left:108px;top:1049.5px;width:1690px;height:1.5px;background:#323232;"></div>
<div class="r" style="left:128.7px;top:1056px;width:15px;height:15px;border-radius:50%;background:#22b830"></div>
<div class="r" style="left:133.7px;top:1061px;width:5px;height:5px;border-radius:50%;background:#fff"></div>
<div class="t" style="left:148.00px;top:1055.00px;font-family:'Liberation Sans',sans-serif;font-size:16px;font-weight:400;font-style:normal;color:#dcdcdc;line-height:20px;">Local backup on</div>
<svg class="r" style="left:285px;top:1055px;" width="18" height="18" viewBox="0 0 18 18" fill="none"><path d="M8 2 H2.5 Q1.5 2 1.5 3 V15 Q1.5 16 2.5 16 H8" stroke="#cfcfcf" stroke-width="1.3"/><path d="M8 2 H16 V6 M8 16 H16.5 M10 8.5 H16.5 M10 12.5 H16.5" stroke="#cfcfcf" stroke-width="1.3"/></svg>
<svg class="r" style="left:1230px;top:1055px;" width="22" height="22" viewBox="0 0 22 22" fill="none"><path d="M10.5 16.6 H2.2 Q1 16.6 1 15.4 V2.2 Q1 1 2.2 1 H18.8 Q20 1 20 2.2 V7.6" stroke="#cfcfcf" stroke-width="1.2"/><path d="M8.4 1 V16.6 M1 4.4 H20 M1 10.4 H10" stroke="#cfcfcf" stroke-width="1.2"/><path d="M15.3 8.6 L19.46 11 V15.8 L15.3 18.2 L11.14 15.8 V11 Z" fill="#1f1f1f" stroke="#cfcfcf" stroke-width="1.2" stroke-linejoin="round"/><circle cx="15.3" cy="13.4" r="1.7" stroke="#cfcfcf" stroke-width="1.1"/></svg>
<svg class="r" style="left:1267px;top:1056px;" width="22" height="16" viewBox="0 0 22 16" fill="none"><path d="M1.6 7.8 Q11 -3.4 20.4 7.8 Q11 19 1.6 7.8 Z" stroke="#cfcfcf" stroke-width="1.3" stroke-linejoin="round"/><circle cx="11" cy="7.8" r="3.1" stroke="#cfcfcf" stroke-width="1.3"/><circle cx="11" cy="7.8" r="0.9" fill="#cfcfcf"/></svg>
<svg class="r" style="left:1310px;top:1055px;" width="18" height="18" viewBox="0 0 18 18" fill="none"><rect x="5.9" y="5.9" width="5.7" height="7.2" rx="1.2" stroke="#cfcfcf" stroke-width="1.2"/><path d="M5.9 4.6 V2.2 Q5.9 1 7.1 1 H10.4 Q11.6 1 11.6 2.2 V4.6 M5.9 14.4 V16 Q5.9 17.2 7.1 17.2 H10.4 Q11.6 17.2 11.6 16 V14.4 M4.6 5.9 H2.2 Q1 5.9 1 7.1 V11.9 Q1 13.1 2.2 13.1 H4.6 M12.9 5.9 H15.3 Q16.5 5.9 16.5 7.1 V11.9 Q16.5 13.1 15.3 13.1 H12.9" stroke="#cfcfcf" stroke-width="1.2"/></svg>
<svg class="r" style="left:1332px;top:1062px;" width="9" height="6" viewBox="0 0 9 6" fill="none"><path d="M1 1 L4.5 4.5 L8 1" stroke="#cfcfcf" stroke-width="1.3"/></svg>
<div class="r" style="left:1360px;top:1056px;width:1px;height:18px;background:#333;"></div>
<div class="r" style="left:1371px;top:1051px;width:28px;height:28px;background:#2e2e2e;border-radius:5px"></div>
<svg class="r" style="left:1377px;top:1056px;" width="17" height="17" viewBox="0 0 17 17" fill="none"><rect x="1" y="1" width="15" height="15" stroke="#cfcfcf" stroke-width="1.3"/><path d="M1 5.5 H16 M5.5 5.5 V16" stroke="#cfcfcf" stroke-width="1.3"/></svg>
<svg class="r" style="left:1414px;top:1056px;" width="18" height="17" viewBox="0 0 18 17" fill="none"><rect x="1" y="1" width="13" height="12" stroke="#cfcfcf" stroke-width="1.3"/><path d="M4 16 H17 V4" stroke="#cfcfcf" stroke-width="1.3"/></svg>
<div class="r" style="left:1448px;top:1056px;width:1px;height:18px;background:#333;"></div>
<div class="t" style="left:1470.00px;top:1054.40px;font-family:'Liberation Sans',sans-serif;font-size:15.25px;font-weight:400;font-style:normal;color:#dcdcdc;line-height:20px;">100%</div>
<svg class="r" style="left:1525px;top:1062px;" width="9" height="6" viewBox="0 0 9 6" fill="none"><path d="M1 1 L4.5 4.5 L8 1" stroke="#cfcfcf" stroke-width="1.3"/></svg>
<div class="r" style="left:1554px;top:1062.5px;width:14px;height:2px;background:#dcdcdc;"></div>
<div class="r" style="left:1584px;top:1062.5px;width:63px;height:2px;background:#1a73f5;border-radius:1px"></div>
<div class="r" style="left:1647px;top:1063px;width:62px;height:1px;background:#444;"></div>
<div class="r" style="left:1640.5px;top:1057px;width:13px;height:13px;border-radius:50%;background:#d0d0d0"></div>
<div class="r" style="left:1644px;top:1060.5px;width:6px;height:6px;border-radius:50%;background:#888"></div>
<svg class="r" style="left:1725px;top:1057px;" width="14" height="14" viewBox="0 0 14 14" fill="none"><path d="M7 1 V13 M1 7 H13" stroke="#dcdcdc" stroke-width="2"/></svg>
<svg class="r" style="left:1762px;top:1055px;" width="17" height="17" viewBox="0 0 17 17" fill="none"><path d="M1.5 5.5 V3.5 Q1.5 1.5 3.5 1.5 H5.5 M15.5 11 V13.5 Q15.5 15.5 13.5 15.5 H11 M10.5 1.5 H13.5 Q15.5 1.5 15.5 3.5 V6.5 M15 2 L9.5 7.5 M1.5 10.5 V13.5 Q1.5 15.5 3.5 15.5 H6.5 M2 15 L7.5 9.5" stroke="#cfcfcf" stroke-width="1.3" stroke-linecap="round"/></svg>
</div></body></html>
